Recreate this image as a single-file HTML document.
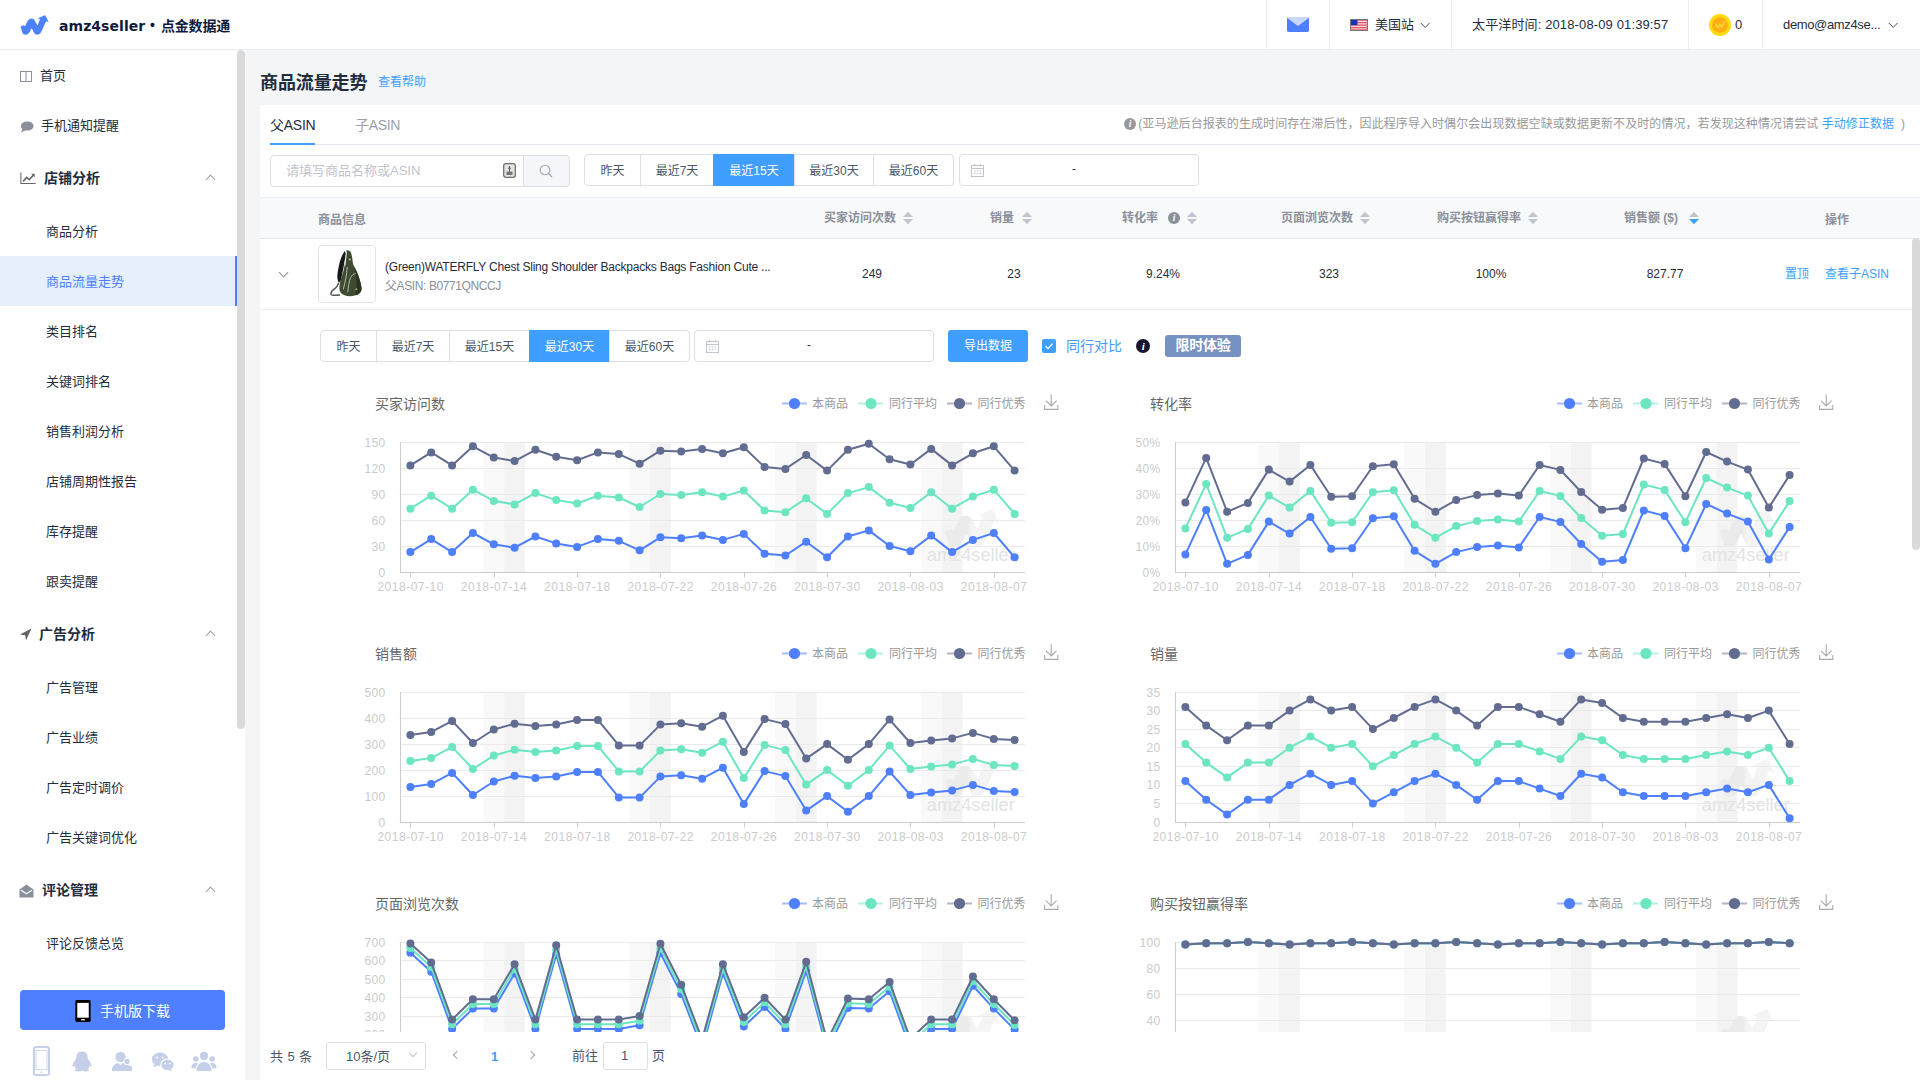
<!DOCTYPE html>
<html lang="zh-CN"><head><meta charset="utf-8"><title>商品流量走势 - amz4seller 点金数据通</title>
<style>
*{box-sizing:border-box;margin:0;padding:0}
html,body{width:1920px;height:1080px;overflow:hidden;background:#f4f5f7}
body{font-family:"Liberation Sans","Noto Sans CJK SC",sans-serif;font-size:12px;color:#1f2d3d;position:relative}
.abs{position:absolute}
a{text-decoration:none;color:#409eff}
.t{position:absolute;white-space:nowrap;line-height:1}
/* header */
#hd{position:absolute;left:0;top:0;width:1920px;height:50px;background:#fff;border-bottom:1px solid #e9ecf2}
.vsep{position:absolute;top:0;width:1px;height:49px;background:#eceef2}
/* sidebar */
#sb{position:absolute;left:0;top:50px;width:245px;height:1030px;background:#fff}
.mi{position:absolute;left:0;width:237px;height:50px;line-height:52px;font-size:13px;color:#1f2d3d;white-space:nowrap}
.mi.sub{padding-left:46px}
.mi.top{font-weight:bold;font-size:14px;line-height:50px}
.mi.act{background:#e6f0fd;color:#4d7fff;border-right:2px solid #4d7fff}
.chev{position:absolute;width:7px;height:7px;border-left:1px solid #9aa3b5;border-top:1px solid #9aa3b5;transform:rotate(45deg)}
/* main */
#card{position:absolute;left:260px;top:105px;width:1660px;height:975px;background:#fff}
.btn{position:absolute;height:32px;line-height:30px;border:1px solid #dcdfe6;background:#fff;color:#48576a;font-size:12px;text-align:center;white-space:nowrap}
.btn.on{background:#409eff;border-color:#409eff;color:#fff}
.inp{position:absolute;height:32px;border:1px solid #dcdfe6;background:#fff;border-radius:4px}
.th{position:absolute;top:198px;height:40px;line-height:40px;font-size:12px;font-weight:bold;color:#8a8f99;white-space:nowrap}
.td{position:absolute;font-size:12px;color:#1f2d3d;white-space:nowrap;line-height:14px}
.sort{position:absolute;width:10px;height:14px}
</style></head>
<body>
<div id="hd">
<svg class="abs" style="left:14px;top:8px" width="42" height="34" viewBox="0 0 42 34">
<path d="M6.7 19.2 Q6.6 18.4 7.6 17.9 L8.6 17.4 Q9.6 17 10.3 17.8 Q10.9 18.5 11.4 17.5 L13.4 13.2 Q14.8 10.6 17.3 10.6 Q19.9 10.6 21 12.8 L22.8 16.4 Q23.4 17.6 23.9 16.4 L26.1 11 L23.6 10.5 L30.6 7.2 Q31.1 7 31.4 7.5 L34.7 14.3 L32.1 13.3 L27.2 23.9 Q25.7 26.8 23.3 26.8 Q21 26.8 20 24.8 L18.1 20.9 Q17.6 19.9 17.1 20.9 L15.7 23.9 Q14.2 26.7 11.7 26.7 Q9.6 26.7 8.6 25.2 Z" fill="#4d82ff"/></svg>
<div class="t" style="left:59px;top:16px;font-family:DejaVu Sans,Liberation Sans,sans-serif;font-size:14px;font-weight:bold;color:#0f1b3d;line-height:20px;letter-spacing:0.05px" id="brand">amz4seller</div>
<div class="t" style="left:150px;top:15px;font-size:14px;font-weight:bold;color:#0f1b3d;line-height:20px">•</div>
<div class="t" style="left:161px;top:16px;font-size:14px;font-weight:bold;color:#0f1b3d;line-height:20px;letter-spacing:-0.2px">点金数据通</div>
<div class="vsep" style="left:1266px"></div>
<div class="vsep" style="left:1329px"></div>
<div class="vsep" style="left:1451px"></div>
<div class="vsep" style="left:1688px"></div>
<div class="vsep" style="left:1762px"></div>
<svg class="abs" style="left:1287px;top:17px" width="22" height="15" viewBox="0 0 22 15"><rect x="0" y="0" width="22" height="15" rx="1.8" fill="#4d7fff"/><path d="M1.2 0 H20.8 Q21.6 0.2 21.8 0.9 L11 8.9 L0.2 0.9 Q0.4 0.2 1.2 0 Z" fill="#c9d6ff"/></svg>
<svg class="abs" style="left:1350px;top:19px" width="18" height="12" viewBox="0 0 18 12">
<rect width="18" height="12" fill="#f7d9db"/>
<g fill="#dc5a66"><rect y="0.5" width="18" height="1.3"/><rect y="3" width="18" height="1.3"/><rect y="5.5" width="18" height="1.3"/><rect y="8" width="18" height="1.3"/><rect y="10.3" width="18" height="1.2"/></g>
<rect x="0.5" y="0.5" width="7" height="5.6" fill="#1535b8"/><rect x="0.5" y="0.5" width="17" height="11" fill="none" stroke="#777" stroke-width="1"/></svg>
<div class="t" style="left:1375px;top:18px;font-size:13px;color:#1f2d3d;line-height:14px">美国站</div>
<svg class="abs" style="left:1419.5px;top:21.6px" width="11" height="7" viewBox="0 0 11 7"><path d="M0.7 0.9 L5.2 5.4 L9.7 0.9" fill="none" stroke="#4a4f5c" stroke-width="1"/></svg>
<div class="t" style="left:1472px;top:18px;font-size:13px;color:#1f2d3d;line-height:14px;letter-spacing:0.13px" id="tm">太平洋时间: 2018-08-09 01:39:57</div>
<svg class="abs" style="left:1708px;top:13px" width="24" height="24" viewBox="0 0 24 24"><circle cx="12" cy="12" r="11" fill="#ffdb0c"/><circle cx="12" cy="12" r="7.8" fill="#ffad12"/><path d="M7 11.8 L8.6 10.6 L10 13 L11.8 9.6 L13.6 12.6 L15.6 8.6 L14.6 8.4 L17.2 7.4 L17.8 10 L16.9 9.5 L14.6 14.6 Q13.7 15.8 12.8 14.6 L11.9 13 L10.9 14.8 Q10 16 9 14.8 Z" fill="#ffd633"/></svg>
<div class="t" style="left:1735px;top:18px;font-size:13px;color:#1f2d3d;line-height:14px">0</div>
<div class="t" style="left:1783px;top:18px;font-size:13px;color:#1f2d3d;line-height:14px;letter-spacing:-0.35px" id="usr">demo@amz4se...</div>
<svg class="abs" style="left:1888.2px;top:21.6px" width="11" height="7" viewBox="0 0 11 7"><path d="M0.7 0.9 L5.2 5.4 L9.7 0.9" fill="none" stroke="#4a4f5c" stroke-width="1"/></svg>
</div>
<div id="sb">
<div class="mi " style="top:0px;padding-left:40px">首页</div>
<svg class="abs" style="left:20px;top:21px" width="12" height="11" viewBox="0 0 12 11"><rect x="0.5" y="0.5" width="11" height="10" fill="none" stroke="#8a8f99" stroke-width="1"/><line x1="6" y1="0.5" x2="6" y2="10.5" stroke="#8a8f99"/></svg>
<div class="mi " style="top:50px;padding-left:41px">手机通知提醒</div>
<svg class="abs" style="left:20px;top:71px" width="14" height="12" viewBox="0 0 14 12"><ellipse cx="7.2" cy="5" rx="6.4" ry="4.6" fill="#8a8f99"/><path d="M2.5 7.5 L1 11.5 L6 9 Z" fill="#8a8f99"/></svg>
<div class="mi top" style="top:103px;padding-left:44px">店铺分析</div>
<svg class="abs" style="left:20px;top:122px" width="16" height="12.5" viewBox="0 0 18 14"><path d="M1 0.5 V13 H17.5" fill="none" stroke="#666" stroke-width="1.2"/><path d="M3.5 10.5 L7.5 6 L10.5 8.5 L15.5 3" fill="none" stroke="#666" stroke-width="1.8"/><path d="M12.5 2 H16.5 V6 Z" fill="#666"/></svg>
<div class="chev" style="left:207px;top:126px"></div>
<div class="mi sub" style="top:156px;">商品分析</div>
<div class="mi sub act" style="top:206px;">商品流量走势</div>
<div class="mi sub" style="top:256px;">类目排名</div>
<div class="mi sub" style="top:306px;">关键词排名</div>
<div class="mi sub" style="top:356px;">销售利润分析</div>
<div class="mi sub" style="top:406px;">店铺周期性报告</div>
<div class="mi sub" style="top:456px;">库存提醒</div>
<div class="mi sub" style="top:506px;">跟卖提醒</div>
<div class="mi top" style="top:559px;padding-left:39px">广告分析</div>
<svg class="abs" style="left:19px;top:578px" width="13" height="13" viewBox="0 0 13 13"><path d="M12.5 0.5 L0.8 6.6 L6.2 7.2 L7 12.5 Z" fill="#666"/></svg>
<div class="chev" style="left:207px;top:582px"></div>
<div class="mi sub" style="top:612px;">广告管理</div>
<div class="mi sub" style="top:662px;">广告业绩</div>
<div class="mi sub" style="top:712px;">广告定时调价</div>
<div class="mi sub" style="top:762px;">广告关键词优化</div>
<div class="mi top" style="top:815px;padding-left:42px">评论管理</div>
<svg class="abs" style="left:19px;top:834px" width="15" height="14" viewBox="0 0 15 14"><path d="M0.5 5.5 L7.5 0.5 L14.5 5.5 V13.5 H0.5 Z" fill="#8a8f99"/><path d="M2 6.2 L7.5 9.8 L13 6.2" fill="none" stroke="#fff" stroke-width="1.2"/></svg>
<div class="chev" style="left:207px;top:838px"></div>
<div class="mi sub" style="top:868px;">评论反馈总览</div>
<div class="abs" style="left:237px;top:0;width:8px;height:679px;background:#dadada;border-radius:4px"></div>
<div class="abs" style="left:0;top:920px;width:237px;height:110px;background:#fff"></div>
<div class="abs" style="left:20px;top:940px;width:205px;height:40px;background:#4d7fff;border-radius:4px"></div>
<svg class="abs" style="left:75px;top:950px" width="16" height="22" viewBox="0 0 16 23"><rect x="0" y="0" width="16" height="23" rx="1.5" fill="#000"/><rect x="2" y="3" width="12" height="15.5" fill="#fff"/><rect x="6" y="20" width="4" height="1.3" fill="#fff"/></svg>
<div class="t" style="left:100px;top:953px;font-size:14px;color:#fff;line-height:16px">手机版下载</div>
<svg class="abs" style="left:33px;top:996px" width="17" height="30" viewBox="0 0 17 30"><rect x="1" y="1" width="15" height="28" rx="2" fill="none" stroke="#c5cfe8" stroke-width="2"/><rect x="3" y="4.5" width="11" height="19" fill="#fff" stroke="#c5cfe8" stroke-width="0.8"/><circle cx="8.5" cy="26.3" r="1" fill="#c5cfe8"/></svg>
<svg class="abs" style="left:71px;top:1001px" width="22" height="21" viewBox="0 0 22 21"><path d="M11 0.5 C6.5 0.5 5 4 5.2 7.5 C3.5 10 1.5 12.5 1.5 15 C1.5 16.5 2.5 16 3.5 14.8 C4 16.5 4.8 17.5 5.5 18 C4 18.5 3.5 19.2 4 19.8 C5 20.8 9 20.6 11 19.5 C13 20.6 17 20.8 18 19.8 C18.5 19.2 18 18.5 16.5 18 C17.2 17.5 18 16.5 18.5 14.8 C19.5 16 20.5 16.5 20.5 15 C20.5 12.5 18.5 10 16.8 7.5 C17 4 15.5 0.5 11 0.5 Z" fill="#c5cfe8"/></svg>
<svg class="abs" style="left:111px;top:1001px" width="22" height="21" viewBox="0 0 22 21"><circle cx="9.5" cy="6" r="5.2" fill="#c5cfe8"/><path d="M0.8 20 C0.8 15 4 12.5 7 12 L9.5 14 L12 12 C15 12.5 19 15 19 20 Z" fill="#c5cfe8"/><circle cx="16" cy="10.5" r="3.2" fill="#c5cfe8" stroke="#fff" stroke-width="1"/><path d="M14 15 C16 13.5 19 14 21 16 L21 20 H14 Z" fill="#c5cfe8"/></svg>
<svg class="abs" style="left:151px;top:1002px" width="24" height="20" viewBox="0 0 24 20"><ellipse cx="9" cy="7.2" rx="8.2" ry="6.8" fill="#c5cfe8"/><path d="M3.5 11.5 L2.5 15.5 L7 13 Z" fill="#c5cfe8"/><ellipse cx="16.5" cy="12.8" rx="6.8" ry="5.8" fill="#c5cfe8" stroke="#fff" stroke-width="1.2"/><path d="M19.5 17 L21.5 19.5 L17 18 Z" fill="#c5cfe8"/><circle cx="6.2" cy="5.5" r="1" fill="#fff"/><circle cx="11.5" cy="5.5" r="1" fill="#fff"/><circle cx="14.3" cy="11.5" r="0.9" fill="#fff"/><circle cx="18.7" cy="11.5" r="0.9" fill="#fff"/></svg>
<svg class="abs" style="left:191px;top:1001px" width="26" height="21" viewBox="0 0 26 21"><circle cx="13" cy="5" r="4.2" fill="#c5cfe8"/><circle cx="4.8" cy="8" r="2.8" fill="#c5cfe8"/><circle cx="21.2" cy="8" r="2.8" fill="#c5cfe8"/><path d="M5.5 20 C5.5 14 9 11 13 11 C17 11 20.5 14 20.5 20 Z" fill="#c5cfe8"/><path d="M0.5 17 C0.5 13.5 2.5 11.8 5 11.8 C6 11.8 6.8 12 7.2 12.4 C5.5 14 4.6 15.5 4.4 17.5 Z" fill="#c5cfe8"/><path d="M25.5 17 C25.5 13.5 23.5 11.8 21 11.8 C20 11.8 19.2 12 18.8 12.4 C20.5 14 21.4 15.5 21.6 17.5 Z" fill="#c5cfe8"/></svg>
</div>
<div class="t" style="left:260px;top:70.5px;font-size:18px;font-weight:bold;color:#1f2d3d;line-height:24px;letter-spacing:-0.1px">商品流量走势</div>
<div class="t" style="left:378px;top:75px;font-size:12px;color:#409eff;line-height:14px">查看帮助</div>
<div id="card"></div>
<div class="t" style="left:270px;top:117px;font-size:14px;color:#1f2d3d;line-height:16px;letter-spacing:-0.25px" id="tab1">父ASIN</div>
<div class="t" style="left:355px;top:117px;font-size:14px;color:#9aa0aa;line-height:16px;letter-spacing:-0.3px">子ASIN</div>
<div class="abs" style="left:270px;top:144px;width:1650px;height:1px;background:#e4e7ed"></div>
<div class="abs" style="left:270px;top:143px;width:45px;height:2px;background:#409eff"></div>
<svg class="abs" style="left:1124px;top:118px" width="12" height="12" viewBox="0 0 14 14"><circle cx="7" cy="7" r="7" fill="#999"/><text x="7.2" y="11" text-anchor="middle" font-family="Liberation Serif,serif" font-style="italic" font-weight="bold" font-size="11" fill="#fff">i</text></svg>
<div class="t" style="right:15px;top:116px;font-size:12px;color:#999;line-height:16px;letter-spacing:0.07px" id="note">(亚马逊后台报表的生成时间存在滞后性，因此程序导入时偶尔会出现数据空缺或数据更新不及时的情况，若发现这种情况请尝试 <a>手动修正数据</a>&nbsp;&nbsp;)</div>
<div class="inp" style="left:270px;top:155px;width:254px;border-radius:4px 0 0 4px"></div>
<div class="t" style="left:286px;top:163px;font-size:13px;color:#c0c4cc;line-height:16px">请填写商品名称或ASIN</div>
<svg class="abs" style="left:503px;top:163px" width="13" height="15" viewBox="0 0 13 15"><rect x="0.7" y="0.7" width="11.6" height="13.6" rx="2" fill="#e4e4e4" stroke="#6e6e6e" stroke-width="1.3"/><rect x="3.4" y="8.6" width="6.2" height="3.4" fill="#777"/><circle cx="6.5" cy="5.2" r="1.2" fill="#666"/><line x1="6.5" y1="3" x2="6.5" y2="9" stroke="#666"/></svg>
<div class="abs" style="left:523px;top:155px;width:47px;height:32px;border:1px solid #dcdfe6;background:#f5f7fa;border-radius:0 4px 4px 0"></div>
<svg class="abs" style="left:539px;top:164px" width="14" height="14" viewBox="0 0 14 14"><circle cx="6" cy="6" r="4.8" fill="none" stroke="#a0a5ae" stroke-width="1.1"/><line x1="9.5" y1="9.5" x2="13" y2="13" stroke="#a0a5ae" stroke-width="1.2"/></svg>
<div class="btn" style="left:584px;top:154px;width:57px;height:32px;line-height:32px;border-radius:4px 0 0 4px;">昨天</div>
<div class="btn" style="left:640px;top:154px;width:74px;height:32px;line-height:32px;">最近7天</div>
<div class="btn on" style="left:713px;top:154px;width:82px;height:32px;line-height:32px;">最近15天</div>
<div class="btn" style="left:794px;top:154px;width:80px;height:32px;line-height:32px;">最近30天</div>
<div class="btn" style="left:873px;top:154px;width:81px;height:32px;line-height:32px;border-radius:0 4px 4px 0;">最近60天</div>
<div class="inp" style="left:959px;top:154px;width:240px"></div>
<svg class="abs" style="left:971px;top:164px" width="13" height="13" viewBox="0 0 13 13"><rect x="0.5" y="1.5" width="12" height="11" fill="none" stroke="#c0c4cc"/><line x1="0.5" y1="4.5" x2="12.5" y2="4.5" stroke="#c0c4cc"/><line x1="3.5" y1="0" x2="3.5" y2="2.5" stroke="#c0c4cc"/><line x1="9.5" y1="0" x2="9.5" y2="2.5" stroke="#c0c4cc"/><g fill="#c0c4cc"><rect x="3" y="6.5" width="1.5" height="1"/><rect x="5.8" y="6.5" width="1.5" height="1"/><rect x="8.6" y="6.5" width="1.5" height="1"/><rect x="3" y="9" width="1.5" height="1"/><rect x="5.8" y="9" width="1.5" height="1"/><rect x="8.6" y="9" width="1.5" height="1"/></g></svg>
<div class="t" style="left:1072px;top:162px;font-size:12px;color:#333;line-height:14px">-</div>
<div class="abs" style="left:260px;top:197px;width:1660px;height:1px;background:#ebeef5"></div>
<div class="abs" style="left:260px;top:198px;width:1660px;height:40px;background:#f8f9fb"></div>
<div class="abs" style="left:260px;top:238px;width:1660px;height:1px;background:#e6e9f0"></div>
<div class="th" style="left:318px;top:200px">商品信息</div>
<div class="th" style="left:824px;top:198px">买家访问次数</div>
<svg class="abs" style="left:903px;top:211px" width="10" height="14" viewBox="0 0 10 14"><path d="M0 6 L5 0.8 L10 6 Z" fill="#c0c4cc"/><path d="M0 8 L5 13.2 L10 8 Z" fill="#c0c4cc"/></svg>
<div class="th" style="left:990px;top:198px">销量</div>
<svg class="abs" style="left:1022px;top:211px" width="10" height="14" viewBox="0 0 10 14"><path d="M0 6 L5 0.8 L10 6 Z" fill="#c0c4cc"/><path d="M0 8 L5 13.2 L10 8 Z" fill="#c0c4cc"/></svg>
<div class="th" style="left:1122px;top:198px">转化率</div>
<div class="th" style="left:1281px;top:198px">页面浏览次数</div>
<svg class="abs" style="left:1360px;top:211px" width="10" height="14" viewBox="0 0 10 14"><path d="M0 6 L5 0.8 L10 6 Z" fill="#c0c4cc"/><path d="M0 8 L5 13.2 L10 8 Z" fill="#c0c4cc"/></svg>
<div class="th" style="left:1437px;top:198px">购买按钮赢得率</div>
<svg class="abs" style="left:1528px;top:211px" width="10" height="14" viewBox="0 0 10 14"><path d="M0 6 L5 0.8 L10 6 Z" fill="#c0c4cc"/><path d="M0 8 L5 13.2 L10 8 Z" fill="#c0c4cc"/></svg>
<div class="th" style="left:1624px;top:198px">销售额 ($)</div>
<svg class="abs" style="left:1689px;top:211px" width="10" height="14" viewBox="0 0 10 14"><path d="M0 6 L5 0.8 L10 6 Z" fill="#c0c4cc"/><path d="M0 8 L5 13.2 L10 8 Z" fill="#409eff"/></svg>
<svg class="abs" style="left:1168px;top:212px" width="12" height="12" viewBox="0 0 14 14"><circle cx="7" cy="7" r="7" fill="#8a8f99"/><text x="7.2" y="11" text-anchor="middle" font-family="Liberation Serif,serif" font-style="italic" font-weight="bold" font-size="11" fill="#fff">i</text></svg>
<svg class="abs" style="left:1187px;top:211px" width="10" height="14" viewBox="0 0 10 14"><path d="M0 6 L5 0.8 L10 6 Z" fill="#c0c4cc"/><path d="M0 8 L5 13.2 L10 8 Z" fill="#c0c4cc"/></svg>
<div class="th" style="left:1825px;top:200px">操作</div>
<div class="abs" style="left:260px;top:309px;width:1652px;height:1px;background:#ebeef5"></div>
<div class="chev" style="left:280px;top:269px;transform:rotate(225deg);border-color:#8a8f99"></div>
<div class="abs" style="left:318px;top:245px;width:58px;height:58px;border:1px solid #e3e3e3;border-radius:4px;background:#fff"></div>
<svg class="abs" style="left:318px;top:245px" width="58" height="58" viewBox="0 0 58 58">
<path d="M26.8 5.9 C24.5 9 22 15 20.9 20.7 C19.8 26 19.2 30 19.4 32.5 C19.6 35 20.2 37 20.9 37.9 L23 35 C24 30 25 25 25.6 21.9 C26.6 16 27.4 11 28 8.8 Z" fill="#17181a"/>
<path d="M28.3 5.3 C30 5.2 31.8 5.8 32.7 7.1 C34 10 34.4 15 35.1 18.9 C36 21.5 37.6 24 38.7 26.6 C40.8 31.5 42.6 37 43.4 42 C43.8 44.5 43.2 46.2 42.2 47.4 C41 49 39.5 49.8 37.5 50.3 C35.5 50.9 33.5 51.2 31.5 51.2 C28.5 51.1 26 50.5 24.4 49.1 C22.6 47.8 21.7 46.3 21.5 44.4 C21.3 42 21.6 39.5 22.1 37.3 C23 33 24.6 29 25.6 25.4 C26.5 21.5 27 18 27.4 14.8 C27.8 11.5 28 8 28.3 5.3 Z" fill="#3f4a32"/>
<path d="M35.1 18.9 C36 21.5 37.6 24 38.7 26.6 C40.8 31.5 42.6 37 43.4 42 C43.8 44.5 43.2 46.2 42.2 47.4 C41 49 39.5 49.8 37.5 50.3 C38.5 44 39 37 38 30 C37.4 26 36.4 22 35.1 18.9 Z" fill="#2a3222"/>
<path d="M28.4 6.5 C28 11 27.6 16 26.8 20.7" fill="none" stroke="#e9ebe3" stroke-width="1.1"/>
<path d="M29.2 21.9 C29 25.5 28.6 29 28 32.5 C27.3 36.5 26.2 40.5 25.3 44.4" fill="none" stroke="#b4b8a6" stroke-width="1"/>
<path d="M37.5 28.4 C35.4 29 33.6 30.5 32.7 32.5 C31 36.5 30.2 42 29.8 47.4" fill="none" stroke="#b4b8a6" stroke-width="1"/>
<path d="M20.6 37.9 C20 39.6 19.4 41 18.5 42 C17 43.6 15 44.8 13.8 46.2 C12.8 47.4 12.6 48.8 13.2 49.7 C14 50.4 15.3 50.4 16.7 50.3 C18.5 50.2 20.5 50.1 22.1 50" fill="none" stroke="#55584f" stroke-width="1.5"/>
<circle cx="31.8" cy="14.5" r="0.9" fill="#c9ccbe"/><path d="M36.5 44.5 l2.2 -1.6 l1 2.4 z" fill="#9ea38f"/></svg>
<div class="td" style="left:385px;top:260px;color:#1f2d3d;letter-spacing:-0.22px" id="ptitle">(Green)WATERFLY Chest Sling Shoulder Backpacks Bags Fashion Cute ...</div>
<div class="td" style="left:385px;top:279px;color:#8a8f99;letter-spacing:-0.4px" id="pasin">父ASIN: B0771QNCCJ</div>
<div class="td" style="left:822px;width:100px;text-align:center;top:267px">249</div>
<div class="td" style="left:964px;width:100px;text-align:center;top:267px">23</div>
<div class="td" style="left:1113px;width:100px;text-align:center;top:267px">9.24%</div>
<div class="td" style="left:1279px;width:100px;text-align:center;top:267px">323</div>
<div class="td" style="left:1441px;width:100px;text-align:center;top:267px">100%</div>
<div class="td" style="left:1615px;width:100px;text-align:center;top:267px">827.77</div>
<div class="td" style="left:1785px;top:267px;color:#409eff">置顶</div>
<div class="td" style="left:1825px;top:267px;color:#409eff" id="viewsub">查看子ASIN</div>
<div class="btn" style="left:320px;top:330px;width:57px;height:32px;line-height:32px;border-radius:4px 0 0 4px;">昨天</div>
<div class="btn" style="left:376px;top:330px;width:74px;height:32px;line-height:32px;">最近7天</div>
<div class="btn" style="left:449px;top:330px;width:81px;height:32px;line-height:32px;">最近15天</div>
<div class="btn on" style="left:529px;top:330px;width:81px;height:32px;line-height:32px;">最近30天</div>
<div class="btn" style="left:609px;top:330px;width:81px;height:32px;line-height:32px;border-radius:0 4px 4px 0;">最近60天</div>
<div class="inp" style="left:694px;top:330px;width:240px"></div>
<svg class="abs" style="left:706px;top:340px" width="13" height="13" viewBox="0 0 13 13"><rect x="0.5" y="1.5" width="12" height="11" fill="none" stroke="#c0c4cc"/><line x1="0.5" y1="4.5" x2="12.5" y2="4.5" stroke="#c0c4cc"/><line x1="3.5" y1="0" x2="3.5" y2="2.5" stroke="#c0c4cc"/><line x1="9.5" y1="0" x2="9.5" y2="2.5" stroke="#c0c4cc"/><g fill="#c0c4cc"><rect x="3" y="6.5" width="1.5" height="1"/><rect x="5.8" y="6.5" width="1.5" height="1"/><rect x="8.6" y="6.5" width="1.5" height="1"/><rect x="3" y="9" width="1.5" height="1"/><rect x="5.8" y="9" width="1.5" height="1"/><rect x="8.6" y="9" width="1.5" height="1"/></g></svg>
<div class="t" style="left:807px;top:338px;font-size:12px;color:#333;line-height:14px">-</div>
<div class="abs" style="left:948px;top:330px;width:80px;height:32px;background:#409eff;border-radius:3px;color:#fff;font-size:12px;line-height:33px;text-align:center">导出数据</div>
<div class="abs" style="left:1042px;top:339px;width:14px;height:14px;background:#409eff;border-radius:2px"></div>
<svg class="abs" style="left:1042px;top:339px" width="14" height="14" viewBox="0 0 14 14"><path d="M3.5 7 L6 9.6 L10.5 4.6" fill="none" stroke="#fff" stroke-width="1.3"/></svg>
<div class="t" style="left:1066px;top:338px;font-size:14px;color:#409eff;line-height:16px">同行对比</div>
<svg class="abs" style="left:1136px;top:339px" width="14" height="14" viewBox="0 0 14 14"><circle cx="7" cy="7" r="7" fill="#15152e"/><text x="7.2" y="11" text-anchor="middle" font-family="Liberation Serif,serif" font-style="italic" font-weight="bold" font-size="11" fill="#fff">i</text></svg>
<div class="abs" style="left:1165px;top:335px;width:76px;height:22px;background:#7692c1;border-radius:3px;color:#fff;font-size:14px;font-weight:bold;line-height:21px;text-align:center;letter-spacing:-0.3px">限时体验</div>
<svg class="abs" style="left:360px;top:385px" width="720" height="250" viewBox="0 0 720 250" font-family="Liberation Sans, Noto Sans CJK SC, sans-serif">
<text x="15" y="24" font-size="14" fill="#666">买家访问数</text>
<line x1="422" y1="18.5" x2="447" y2="18.5" stroke="#4d7fff" stroke-width="2" opacity="0.5"/><circle cx="434.5" cy="18.5" r="5.6" fill="#4d7fff"/><text x="452" y="23" font-size="12" fill="#999">本商品</text>
<line x1="498" y1="18.5" x2="523" y2="18.5" stroke="#6be6c1" stroke-width="2" opacity="0.5"/><circle cx="511" cy="18.5" r="5.6" fill="#6be6c1"/><text x="529" y="23" font-size="12" fill="#999">同行平均</text>
<line x1="587" y1="18.5" x2="612" y2="18.5" stroke="#626c91" stroke-width="2" opacity="0.5"/><circle cx="599.5" cy="18.5" r="5.6" fill="#626c91"/><text x="617.5" y="23" font-size="12" fill="#999">同行优秀</text>
<path d="M691.2 9.3 V21 M685.8 15.6 L691.2 21 L696.6 15.6 M684.6 20 V24.4 H697.8 V20" fill="none" stroke="#aaa" stroke-width="1.1"/>
<rect x="123.33" y="57.5" width="20.83" height="130.0" fill="#f9f9f9"/>
<rect x="144.17" y="57.5" width="20.83" height="130.0" fill="#f3f3f3"/>
<rect x="269.17" y="57.5" width="20.83" height="130.0" fill="#f9f9f9"/>
<rect x="290.00" y="57.5" width="20.83" height="130.0" fill="#f3f3f3"/>
<rect x="415.00" y="57.5" width="20.83" height="130.0" fill="#f9f9f9"/>
<rect x="435.83" y="57.5" width="20.83" height="130.0" fill="#f3f3f3"/>
<rect x="560.83" y="57.5" width="20.83" height="130.0" fill="#f9f9f9"/>
<rect x="581.67" y="57.5" width="20.83" height="130.0" fill="#f3f3f3"/>
<defs><linearGradient id="wm00" x1="0" y1="0" x2="1" y2="0"><stop offset="0.42" stop-color="#ebebeb"/><stop offset="0.5" stop-color="#f4f4f4"/></linearGradient></defs>
<path d="M6.7 19.2 Q6.6 18.4 7.6 17.9 L8.6 17.4 Q9.6 17 10.3 17.8 Q10.9 18.5 11.4 17.5 L13.4 13.2 Q14.8 10.6 17.3 10.6 Q19.9 10.6 21 12.8 L22.8 16.4 Q23.4 17.6 23.9 16.4 L26.1 11 L23.6 10.5 L30.6 7.2 Q31.1 7 31.4 7.5 L34.7 14.3 L32.1 13.3 L27.2 23.9 Q25.7 26.8 23.3 26.8 Q21 26.8 20 24.8 L18.1 20.9 Q17.6 19.9 17.1 20.9 L15.7 23.9 Q14.2 26.7 11.7 26.7 Q9.6 26.7 8.6 25.2 Z" transform="translate(572.2 110.4) scale(1.93)" fill="url(#wm00)"/>
<text x="566.8" y="175.9" font-size="17.5" fill="#e3e3e3" textLength="88" lengthAdjust="spacingAndGlyphs">amz4seller</text>
<text x="25.5" y="191.55" font-size="12" fill="#cbcbcb" text-anchor="end" letter-spacing="0.35">0</text>
<line x1="40.5" y1="161.5" x2="665.0" y2="161.5" stroke="#eaeaea" stroke-width="1"/>
<text x="25.5" y="165.55" font-size="12" fill="#cbcbcb" text-anchor="end" letter-spacing="0.35">30</text>
<line x1="40.5" y1="135.5" x2="665.0" y2="135.5" stroke="#eaeaea" stroke-width="1"/>
<text x="25.5" y="139.55" font-size="12" fill="#cbcbcb" text-anchor="end" letter-spacing="0.35">60</text>
<line x1="40.5" y1="109.5" x2="665.0" y2="109.5" stroke="#eaeaea" stroke-width="1"/>
<text x="25.5" y="113.55" font-size="12" fill="#cbcbcb" text-anchor="end" letter-spacing="0.35">90</text>
<line x1="40.5" y1="83.5" x2="665.0" y2="83.5" stroke="#eaeaea" stroke-width="1"/>
<text x="25.5" y="87.55" font-size="12" fill="#cbcbcb" text-anchor="end" letter-spacing="0.35">120</text>
<line x1="40.5" y1="57.5" x2="665.0" y2="57.5" stroke="#eaeaea" stroke-width="1"/>
<text x="25.5" y="61.55" font-size="12" fill="#cbcbcb" text-anchor="end" letter-spacing="0.35">150</text>
<line x1="40.5" y1="57.0" x2="40.5" y2="188.0" stroke="#ccc" stroke-width="1"/>
<line x1="40.0" y1="187.5" x2="665.0" y2="187.5" stroke="#ccc" stroke-width="1"/>
<line x1="50.5" y1="187.5" x2="50.5" y2="192.5" stroke="#ccc" stroke-width="1"/>
<text x="50.4" y="206.0" font-size="12" fill="#cbcbcb" text-anchor="middle" textLength="66" lengthAdjust="spacing">2018-07-10</text>
<line x1="134.5" y1="187.5" x2="134.5" y2="192.5" stroke="#ccc" stroke-width="1"/>
<text x="133.8" y="206.0" font-size="12" fill="#cbcbcb" text-anchor="middle" textLength="66" lengthAdjust="spacing">2018-07-14</text>
<line x1="217.5" y1="187.5" x2="217.5" y2="192.5" stroke="#ccc" stroke-width="1"/>
<text x="217.1" y="206.0" font-size="12" fill="#cbcbcb" text-anchor="middle" textLength="66" lengthAdjust="spacing">2018-07-18</text>
<line x1="300.5" y1="187.5" x2="300.5" y2="192.5" stroke="#ccc" stroke-width="1"/>
<text x="300.4" y="206.0" font-size="12" fill="#cbcbcb" text-anchor="middle" textLength="66" lengthAdjust="spacing">2018-07-22</text>
<line x1="384.5" y1="187.5" x2="384.5" y2="192.5" stroke="#ccc" stroke-width="1"/>
<text x="383.8" y="206.0" font-size="12" fill="#cbcbcb" text-anchor="middle" textLength="66" lengthAdjust="spacing">2018-07-26</text>
<line x1="467.5" y1="187.5" x2="467.5" y2="192.5" stroke="#ccc" stroke-width="1"/>
<text x="467.1" y="206.0" font-size="12" fill="#cbcbcb" text-anchor="middle" textLength="66" lengthAdjust="spacing">2018-07-30</text>
<line x1="550.5" y1="187.5" x2="550.5" y2="192.5" stroke="#ccc" stroke-width="1"/>
<text x="550.4" y="206.0" font-size="12" fill="#cbcbcb" text-anchor="middle" textLength="66" lengthAdjust="spacing">2018-08-03</text>
<line x1="634.5" y1="187.5" x2="634.5" y2="192.5" stroke="#ccc" stroke-width="1"/>
<text x="633.8" y="206.0" font-size="12" fill="#cbcbcb" text-anchor="middle" textLength="66" lengthAdjust="spacing">2018-08-07</text>
<polyline fill="none" stroke="#4d7fff" stroke-width="2" stroke-linejoin="round" points="50.4,167.1 71.2,154.1 92.1,167.1 112.9,148.0 133.8,159.3 154.6,162.7 175.4,151.5 196.2,158.4 217.1,161.9 237.9,154.1 258.8,155.8 279.6,165.3 300.4,152.3 321.2,153.2 342.1,150.6 362.9,154.9 383.8,148.9 404.6,168.8 425.4,170.5 446.2,156.7 467.1,172.3 487.9,151.5 508.8,145.4 529.6,161.0 550.4,166.2 571.2,150.6 592.1,167.1 612.9,154.9 633.8,148.0 654.6,172.3"/><circle cx="50.4" cy="167.1" r="4" fill="#4d7fff"/><circle cx="71.2" cy="154.1" r="4" fill="#4d7fff"/><circle cx="92.1" cy="167.1" r="4" fill="#4d7fff"/><circle cx="112.9" cy="148.0" r="4" fill="#4d7fff"/><circle cx="133.8" cy="159.3" r="4" fill="#4d7fff"/><circle cx="154.6" cy="162.7" r="4" fill="#4d7fff"/><circle cx="175.4" cy="151.5" r="4" fill="#4d7fff"/><circle cx="196.2" cy="158.4" r="4" fill="#4d7fff"/><circle cx="217.1" cy="161.9" r="4" fill="#4d7fff"/><circle cx="237.9" cy="154.1" r="4" fill="#4d7fff"/><circle cx="258.8" cy="155.8" r="4" fill="#4d7fff"/><circle cx="279.6" cy="165.3" r="4" fill="#4d7fff"/><circle cx="300.4" cy="152.3" r="4" fill="#4d7fff"/><circle cx="321.2" cy="153.2" r="4" fill="#4d7fff"/><circle cx="342.1" cy="150.6" r="4" fill="#4d7fff"/><circle cx="362.9" cy="154.9" r="4" fill="#4d7fff"/><circle cx="383.8" cy="148.9" r="4" fill="#4d7fff"/><circle cx="404.6" cy="168.8" r="4" fill="#4d7fff"/><circle cx="425.4" cy="170.5" r="4" fill="#4d7fff"/><circle cx="446.2" cy="156.7" r="4" fill="#4d7fff"/><circle cx="467.1" cy="172.3" r="4" fill="#4d7fff"/><circle cx="487.9" cy="151.5" r="4" fill="#4d7fff"/><circle cx="508.8" cy="145.4" r="4" fill="#4d7fff"/><circle cx="529.6" cy="161.0" r="4" fill="#4d7fff"/><circle cx="550.4" cy="166.2" r="4" fill="#4d7fff"/><circle cx="571.2" cy="150.6" r="4" fill="#4d7fff"/><circle cx="592.1" cy="167.1" r="4" fill="#4d7fff"/><circle cx="612.9" cy="154.9" r="4" fill="#4d7fff"/><circle cx="633.8" cy="148.0" r="4" fill="#4d7fff"/><circle cx="654.6" cy="172.3" r="4" fill="#4d7fff"/>
<polyline fill="none" stroke="#6be6c1" stroke-width="2" stroke-linejoin="round" points="50.4,123.7 71.2,110.7 92.1,123.7 112.9,104.7 133.8,115.9 154.6,119.4 175.4,108.1 196.2,115.1 217.1,118.5 237.9,110.7 258.8,112.5 279.6,122.0 300.4,109.0 321.2,109.9 342.1,107.3 362.9,111.6 383.8,105.5 404.6,125.5 425.4,127.2 446.2,113.3 467.1,128.9 487.9,108.1 508.8,102.1 529.6,117.7 550.4,122.9 571.2,107.3 592.1,123.7 612.9,111.6 633.8,104.7 654.6,128.9"/><circle cx="50.4" cy="123.7" r="4" fill="#6be6c1"/><circle cx="71.2" cy="110.7" r="4" fill="#6be6c1"/><circle cx="92.1" cy="123.7" r="4" fill="#6be6c1"/><circle cx="112.9" cy="104.7" r="4" fill="#6be6c1"/><circle cx="133.8" cy="115.9" r="4" fill="#6be6c1"/><circle cx="154.6" cy="119.4" r="4" fill="#6be6c1"/><circle cx="175.4" cy="108.1" r="4" fill="#6be6c1"/><circle cx="196.2" cy="115.1" r="4" fill="#6be6c1"/><circle cx="217.1" cy="118.5" r="4" fill="#6be6c1"/><circle cx="237.9" cy="110.7" r="4" fill="#6be6c1"/><circle cx="258.8" cy="112.5" r="4" fill="#6be6c1"/><circle cx="279.6" cy="122.0" r="4" fill="#6be6c1"/><circle cx="300.4" cy="109.0" r="4" fill="#6be6c1"/><circle cx="321.2" cy="109.9" r="4" fill="#6be6c1"/><circle cx="342.1" cy="107.3" r="4" fill="#6be6c1"/><circle cx="362.9" cy="111.6" r="4" fill="#6be6c1"/><circle cx="383.8" cy="105.5" r="4" fill="#6be6c1"/><circle cx="404.6" cy="125.5" r="4" fill="#6be6c1"/><circle cx="425.4" cy="127.2" r="4" fill="#6be6c1"/><circle cx="446.2" cy="113.3" r="4" fill="#6be6c1"/><circle cx="467.1" cy="128.9" r="4" fill="#6be6c1"/><circle cx="487.9" cy="108.1" r="4" fill="#6be6c1"/><circle cx="508.8" cy="102.1" r="4" fill="#6be6c1"/><circle cx="529.6" cy="117.7" r="4" fill="#6be6c1"/><circle cx="550.4" cy="122.9" r="4" fill="#6be6c1"/><circle cx="571.2" cy="107.3" r="4" fill="#6be6c1"/><circle cx="592.1" cy="123.7" r="4" fill="#6be6c1"/><circle cx="612.9" cy="111.6" r="4" fill="#6be6c1"/><circle cx="633.8" cy="104.7" r="4" fill="#6be6c1"/><circle cx="654.6" cy="128.9" r="4" fill="#6be6c1"/>
<polyline fill="none" stroke="#626c91" stroke-width="2" stroke-linejoin="round" points="50.4,80.4 71.2,67.4 92.1,80.4 112.9,61.3 133.8,72.6 154.6,76.1 175.4,64.8 196.2,71.7 217.1,75.2 237.9,67.4 258.8,69.1 279.6,78.7 300.4,65.7 321.2,66.5 342.1,63.9 362.9,68.3 383.8,62.2 404.6,82.1 425.4,83.9 446.2,70.0 467.1,85.6 487.9,64.8 508.8,58.7 529.6,74.3 550.4,79.5 571.2,63.9 592.1,80.4 612.9,68.3 633.8,61.3 654.6,85.6"/><circle cx="50.4" cy="80.4" r="4" fill="#626c91"/><circle cx="71.2" cy="67.4" r="4" fill="#626c91"/><circle cx="92.1" cy="80.4" r="4" fill="#626c91"/><circle cx="112.9" cy="61.3" r="4" fill="#626c91"/><circle cx="133.8" cy="72.6" r="4" fill="#626c91"/><circle cx="154.6" cy="76.1" r="4" fill="#626c91"/><circle cx="175.4" cy="64.8" r="4" fill="#626c91"/><circle cx="196.2" cy="71.7" r="4" fill="#626c91"/><circle cx="217.1" cy="75.2" r="4" fill="#626c91"/><circle cx="237.9" cy="67.4" r="4" fill="#626c91"/><circle cx="258.8" cy="69.1" r="4" fill="#626c91"/><circle cx="279.6" cy="78.7" r="4" fill="#626c91"/><circle cx="300.4" cy="65.7" r="4" fill="#626c91"/><circle cx="321.2" cy="66.5" r="4" fill="#626c91"/><circle cx="342.1" cy="63.9" r="4" fill="#626c91"/><circle cx="362.9" cy="68.3" r="4" fill="#626c91"/><circle cx="383.8" cy="62.2" r="4" fill="#626c91"/><circle cx="404.6" cy="82.1" r="4" fill="#626c91"/><circle cx="425.4" cy="83.9" r="4" fill="#626c91"/><circle cx="446.2" cy="70.0" r="4" fill="#626c91"/><circle cx="467.1" cy="85.6" r="4" fill="#626c91"/><circle cx="487.9" cy="64.8" r="4" fill="#626c91"/><circle cx="508.8" cy="58.7" r="4" fill="#626c91"/><circle cx="529.6" cy="74.3" r="4" fill="#626c91"/><circle cx="550.4" cy="79.5" r="4" fill="#626c91"/><circle cx="571.2" cy="63.9" r="4" fill="#626c91"/><circle cx="592.1" cy="80.4" r="4" fill="#626c91"/><circle cx="612.9" cy="68.3" r="4" fill="#626c91"/><circle cx="633.8" cy="61.3" r="4" fill="#626c91"/><circle cx="654.6" cy="85.6" r="4" fill="#626c91"/>
</svg>
<svg class="abs" style="left:1135px;top:385px" width="720" height="250" viewBox="0 0 720 250" font-family="Liberation Sans, Noto Sans CJK SC, sans-serif">
<text x="15" y="24" font-size="14" fill="#666">转化率</text>
<line x1="422" y1="18.5" x2="447" y2="18.5" stroke="#4d7fff" stroke-width="2" opacity="0.5"/><circle cx="434.5" cy="18.5" r="5.6" fill="#4d7fff"/><text x="452" y="23" font-size="12" fill="#999">本商品</text>
<line x1="498" y1="18.5" x2="523" y2="18.5" stroke="#6be6c1" stroke-width="2" opacity="0.5"/><circle cx="511" cy="18.5" r="5.6" fill="#6be6c1"/><text x="529" y="23" font-size="12" fill="#999">同行平均</text>
<line x1="587" y1="18.5" x2="612" y2="18.5" stroke="#626c91" stroke-width="2" opacity="0.5"/><circle cx="599.5" cy="18.5" r="5.6" fill="#626c91"/><text x="617.5" y="23" font-size="12" fill="#999">同行优秀</text>
<path d="M691.2 9.3 V21 M685.8 15.6 L691.2 21 L696.6 15.6 M684.6 20 V24.4 H697.8 V20" fill="none" stroke="#aaa" stroke-width="1.1"/>
<rect x="123.33" y="57.5" width="20.83" height="130.0" fill="#f9f9f9"/>
<rect x="144.17" y="57.5" width="20.83" height="130.0" fill="#f3f3f3"/>
<rect x="269.17" y="57.5" width="20.83" height="130.0" fill="#f9f9f9"/>
<rect x="290.00" y="57.5" width="20.83" height="130.0" fill="#f3f3f3"/>
<rect x="415.00" y="57.5" width="20.83" height="130.0" fill="#f9f9f9"/>
<rect x="435.83" y="57.5" width="20.83" height="130.0" fill="#f3f3f3"/>
<rect x="560.83" y="57.5" width="20.83" height="130.0" fill="#f9f9f9"/>
<rect x="581.67" y="57.5" width="20.83" height="130.0" fill="#f3f3f3"/>
<defs><linearGradient id="wm10" x1="0" y1="0" x2="1" y2="0"><stop offset="0.42" stop-color="#ebebeb"/><stop offset="0.5" stop-color="#f4f4f4"/></linearGradient></defs>
<path d="M6.7 19.2 Q6.6 18.4 7.6 17.9 L8.6 17.4 Q9.6 17 10.3 17.8 Q10.9 18.5 11.4 17.5 L13.4 13.2 Q14.8 10.6 17.3 10.6 Q19.9 10.6 21 12.8 L22.8 16.4 Q23.4 17.6 23.9 16.4 L26.1 11 L23.6 10.5 L30.6 7.2 Q31.1 7 31.4 7.5 L34.7 14.3 L32.1 13.3 L27.2 23.9 Q25.7 26.8 23.3 26.8 Q21 26.8 20 24.8 L18.1 20.9 Q17.6 19.9 17.1 20.9 L15.7 23.9 Q14.2 26.7 11.7 26.7 Q9.6 26.7 8.6 25.2 Z" transform="translate(572.2 110.4) scale(1.93)" fill="url(#wm10)"/>
<text x="566.8" y="175.9" font-size="17.5" fill="#e3e3e3" textLength="88" lengthAdjust="spacingAndGlyphs">amz4seller</text>
<text x="25.5" y="191.55" font-size="12" fill="#cbcbcb" text-anchor="end" letter-spacing="0.35">0%</text>
<line x1="40.5" y1="161.5" x2="665.0" y2="161.5" stroke="#eaeaea" stroke-width="1"/>
<text x="25.5" y="165.55" font-size="12" fill="#cbcbcb" text-anchor="end" letter-spacing="0.35">10%</text>
<line x1="40.5" y1="135.5" x2="665.0" y2="135.5" stroke="#eaeaea" stroke-width="1"/>
<text x="25.5" y="139.55" font-size="12" fill="#cbcbcb" text-anchor="end" letter-spacing="0.35">20%</text>
<line x1="40.5" y1="109.5" x2="665.0" y2="109.5" stroke="#eaeaea" stroke-width="1"/>
<text x="25.5" y="113.55" font-size="12" fill="#cbcbcb" text-anchor="end" letter-spacing="0.35">30%</text>
<line x1="40.5" y1="83.5" x2="665.0" y2="83.5" stroke="#eaeaea" stroke-width="1"/>
<text x="25.5" y="87.55" font-size="12" fill="#cbcbcb" text-anchor="end" letter-spacing="0.35">40%</text>
<line x1="40.5" y1="57.5" x2="665.0" y2="57.5" stroke="#eaeaea" stroke-width="1"/>
<text x="25.5" y="61.55" font-size="12" fill="#cbcbcb" text-anchor="end" letter-spacing="0.35">50%</text>
<line x1="40.5" y1="57.0" x2="40.5" y2="188.0" stroke="#ccc" stroke-width="1"/>
<line x1="40.0" y1="187.5" x2="665.0" y2="187.5" stroke="#ccc" stroke-width="1"/>
<line x1="50.5" y1="187.5" x2="50.5" y2="192.5" stroke="#ccc" stroke-width="1"/>
<text x="50.4" y="206.0" font-size="12" fill="#cbcbcb" text-anchor="middle" textLength="66" lengthAdjust="spacing">2018-07-10</text>
<line x1="134.5" y1="187.5" x2="134.5" y2="192.5" stroke="#ccc" stroke-width="1"/>
<text x="133.8" y="206.0" font-size="12" fill="#cbcbcb" text-anchor="middle" textLength="66" lengthAdjust="spacing">2018-07-14</text>
<line x1="217.5" y1="187.5" x2="217.5" y2="192.5" stroke="#ccc" stroke-width="1"/>
<text x="217.1" y="206.0" font-size="12" fill="#cbcbcb" text-anchor="middle" textLength="66" lengthAdjust="spacing">2018-07-18</text>
<line x1="300.5" y1="187.5" x2="300.5" y2="192.5" stroke="#ccc" stroke-width="1"/>
<text x="300.4" y="206.0" font-size="12" fill="#cbcbcb" text-anchor="middle" textLength="66" lengthAdjust="spacing">2018-07-22</text>
<line x1="384.5" y1="187.5" x2="384.5" y2="192.5" stroke="#ccc" stroke-width="1"/>
<text x="383.8" y="206.0" font-size="12" fill="#cbcbcb" text-anchor="middle" textLength="66" lengthAdjust="spacing">2018-07-26</text>
<line x1="467.5" y1="187.5" x2="467.5" y2="192.5" stroke="#ccc" stroke-width="1"/>
<text x="467.1" y="206.0" font-size="12" fill="#cbcbcb" text-anchor="middle" textLength="66" lengthAdjust="spacing">2018-07-30</text>
<line x1="550.5" y1="187.5" x2="550.5" y2="192.5" stroke="#ccc" stroke-width="1"/>
<text x="550.4" y="206.0" font-size="12" fill="#cbcbcb" text-anchor="middle" textLength="66" lengthAdjust="spacing">2018-08-03</text>
<line x1="634.5" y1="187.5" x2="634.5" y2="192.5" stroke="#ccc" stroke-width="1"/>
<text x="633.8" y="206.0" font-size="12" fill="#cbcbcb" text-anchor="middle" textLength="66" lengthAdjust="spacing">2018-08-07</text>
<polyline fill="none" stroke="#4d7fff" stroke-width="2" stroke-linejoin="round" points="50.4,169.4 71.2,124.9 92.1,178.8 112.9,169.9 133.8,136.6 154.6,148.6 175.4,132.0 196.2,163.7 217.1,163.2 237.9,133.3 258.8,131.2 279.6,165.8 300.4,178.8 321.2,167.1 342.1,162.1 362.9,160.6 383.8,162.6 404.6,132.0 425.4,136.9 446.2,159.0 467.1,176.7 487.9,175.1 508.8,125.5 529.6,130.9 550.4,163.2 571.2,119.0 592.1,128.6 612.9,136.6 633.8,174.6 654.6,142.1"/><circle cx="50.4" cy="169.4" r="4" fill="#4d7fff"/><circle cx="71.2" cy="124.9" r="4" fill="#4d7fff"/><circle cx="92.1" cy="178.8" r="4" fill="#4d7fff"/><circle cx="112.9" cy="169.9" r="4" fill="#4d7fff"/><circle cx="133.8" cy="136.6" r="4" fill="#4d7fff"/><circle cx="154.6" cy="148.6" r="4" fill="#4d7fff"/><circle cx="175.4" cy="132.0" r="4" fill="#4d7fff"/><circle cx="196.2" cy="163.7" r="4" fill="#4d7fff"/><circle cx="217.1" cy="163.2" r="4" fill="#4d7fff"/><circle cx="237.9" cy="133.3" r="4" fill="#4d7fff"/><circle cx="258.8" cy="131.2" r="4" fill="#4d7fff"/><circle cx="279.6" cy="165.8" r="4" fill="#4d7fff"/><circle cx="300.4" cy="178.8" r="4" fill="#4d7fff"/><circle cx="321.2" cy="167.1" r="4" fill="#4d7fff"/><circle cx="342.1" cy="162.1" r="4" fill="#4d7fff"/><circle cx="362.9" cy="160.6" r="4" fill="#4d7fff"/><circle cx="383.8" cy="162.6" r="4" fill="#4d7fff"/><circle cx="404.6" cy="132.0" r="4" fill="#4d7fff"/><circle cx="425.4" cy="136.9" r="4" fill="#4d7fff"/><circle cx="446.2" cy="159.0" r="4" fill="#4d7fff"/><circle cx="467.1" cy="176.7" r="4" fill="#4d7fff"/><circle cx="487.9" cy="175.1" r="4" fill="#4d7fff"/><circle cx="508.8" cy="125.5" r="4" fill="#4d7fff"/><circle cx="529.6" cy="130.9" r="4" fill="#4d7fff"/><circle cx="550.4" cy="163.2" r="4" fill="#4d7fff"/><circle cx="571.2" cy="119.0" r="4" fill="#4d7fff"/><circle cx="592.1" cy="128.6" r="4" fill="#4d7fff"/><circle cx="612.9" cy="136.6" r="4" fill="#4d7fff"/><circle cx="633.8" cy="174.6" r="4" fill="#4d7fff"/><circle cx="654.6" cy="142.1" r="4" fill="#4d7fff"/>
<polyline fill="none" stroke="#6be6c1" stroke-width="2" stroke-linejoin="round" points="50.4,143.4 71.2,98.9 92.1,152.8 112.9,143.9 133.8,110.6 154.6,122.6 175.4,106.0 196.2,137.7 217.1,137.2 237.9,107.3 258.8,105.2 279.6,139.8 300.4,152.8 321.2,141.1 342.1,136.1 362.9,134.6 383.8,136.6 404.6,106.0 425.4,110.9 446.2,133.0 467.1,150.7 487.9,149.1 508.8,99.5 529.6,104.9 550.4,137.2 571.2,93.0 592.1,102.6 612.9,110.6 633.8,148.6 654.6,116.1"/><circle cx="50.4" cy="143.4" r="4" fill="#6be6c1"/><circle cx="71.2" cy="98.9" r="4" fill="#6be6c1"/><circle cx="92.1" cy="152.8" r="4" fill="#6be6c1"/><circle cx="112.9" cy="143.9" r="4" fill="#6be6c1"/><circle cx="133.8" cy="110.6" r="4" fill="#6be6c1"/><circle cx="154.6" cy="122.6" r="4" fill="#6be6c1"/><circle cx="175.4" cy="106.0" r="4" fill="#6be6c1"/><circle cx="196.2" cy="137.7" r="4" fill="#6be6c1"/><circle cx="217.1" cy="137.2" r="4" fill="#6be6c1"/><circle cx="237.9" cy="107.3" r="4" fill="#6be6c1"/><circle cx="258.8" cy="105.2" r="4" fill="#6be6c1"/><circle cx="279.6" cy="139.8" r="4" fill="#6be6c1"/><circle cx="300.4" cy="152.8" r="4" fill="#6be6c1"/><circle cx="321.2" cy="141.1" r="4" fill="#6be6c1"/><circle cx="342.1" cy="136.1" r="4" fill="#6be6c1"/><circle cx="362.9" cy="134.6" r="4" fill="#6be6c1"/><circle cx="383.8" cy="136.6" r="4" fill="#6be6c1"/><circle cx="404.6" cy="106.0" r="4" fill="#6be6c1"/><circle cx="425.4" cy="110.9" r="4" fill="#6be6c1"/><circle cx="446.2" cy="133.0" r="4" fill="#6be6c1"/><circle cx="467.1" cy="150.7" r="4" fill="#6be6c1"/><circle cx="487.9" cy="149.1" r="4" fill="#6be6c1"/><circle cx="508.8" cy="99.5" r="4" fill="#6be6c1"/><circle cx="529.6" cy="104.9" r="4" fill="#6be6c1"/><circle cx="550.4" cy="137.2" r="4" fill="#6be6c1"/><circle cx="571.2" cy="93.0" r="4" fill="#6be6c1"/><circle cx="592.1" cy="102.6" r="4" fill="#6be6c1"/><circle cx="612.9" cy="110.6" r="4" fill="#6be6c1"/><circle cx="633.8" cy="148.6" r="4" fill="#6be6c1"/><circle cx="654.6" cy="116.1" r="4" fill="#6be6c1"/>
<polyline fill="none" stroke="#626c91" stroke-width="2" stroke-linejoin="round" points="50.4,117.4 71.2,72.9 92.1,126.8 112.9,117.9 133.8,84.6 154.6,96.6 175.4,80.0 196.2,111.7 217.1,111.2 237.9,81.3 258.8,79.2 279.6,113.8 300.4,126.8 321.2,115.1 342.1,110.1 362.9,108.6 383.8,110.6 404.6,80.0 425.4,84.9 446.2,107.0 467.1,124.7 487.9,123.1 508.8,73.5 529.6,78.9 550.4,111.2 571.2,67.0 592.1,76.6 612.9,84.6 633.8,122.6 654.6,90.1"/><circle cx="50.4" cy="117.4" r="4" fill="#626c91"/><circle cx="71.2" cy="72.9" r="4" fill="#626c91"/><circle cx="92.1" cy="126.8" r="4" fill="#626c91"/><circle cx="112.9" cy="117.9" r="4" fill="#626c91"/><circle cx="133.8" cy="84.6" r="4" fill="#626c91"/><circle cx="154.6" cy="96.6" r="4" fill="#626c91"/><circle cx="175.4" cy="80.0" r="4" fill="#626c91"/><circle cx="196.2" cy="111.7" r="4" fill="#626c91"/><circle cx="217.1" cy="111.2" r="4" fill="#626c91"/><circle cx="237.9" cy="81.3" r="4" fill="#626c91"/><circle cx="258.8" cy="79.2" r="4" fill="#626c91"/><circle cx="279.6" cy="113.8" r="4" fill="#626c91"/><circle cx="300.4" cy="126.8" r="4" fill="#626c91"/><circle cx="321.2" cy="115.1" r="4" fill="#626c91"/><circle cx="342.1" cy="110.1" r="4" fill="#626c91"/><circle cx="362.9" cy="108.6" r="4" fill="#626c91"/><circle cx="383.8" cy="110.6" r="4" fill="#626c91"/><circle cx="404.6" cy="80.0" r="4" fill="#626c91"/><circle cx="425.4" cy="84.9" r="4" fill="#626c91"/><circle cx="446.2" cy="107.0" r="4" fill="#626c91"/><circle cx="467.1" cy="124.7" r="4" fill="#626c91"/><circle cx="487.9" cy="123.1" r="4" fill="#626c91"/><circle cx="508.8" cy="73.5" r="4" fill="#626c91"/><circle cx="529.6" cy="78.9" r="4" fill="#626c91"/><circle cx="550.4" cy="111.2" r="4" fill="#626c91"/><circle cx="571.2" cy="67.0" r="4" fill="#626c91"/><circle cx="592.1" cy="76.6" r="4" fill="#626c91"/><circle cx="612.9" cy="84.6" r="4" fill="#626c91"/><circle cx="633.8" cy="122.6" r="4" fill="#626c91"/><circle cx="654.6" cy="90.1" r="4" fill="#626c91"/>
</svg>
<svg class="abs" style="left:360px;top:635px" width="720" height="250" viewBox="0 0 720 250" font-family="Liberation Sans, Noto Sans CJK SC, sans-serif">
<text x="15" y="24" font-size="14" fill="#666">销售额</text>
<line x1="422" y1="18.5" x2="447" y2="18.5" stroke="#4d7fff" stroke-width="2" opacity="0.5"/><circle cx="434.5" cy="18.5" r="5.6" fill="#4d7fff"/><text x="452" y="23" font-size="12" fill="#999">本商品</text>
<line x1="498" y1="18.5" x2="523" y2="18.5" stroke="#6be6c1" stroke-width="2" opacity="0.5"/><circle cx="511" cy="18.5" r="5.6" fill="#6be6c1"/><text x="529" y="23" font-size="12" fill="#999">同行平均</text>
<line x1="587" y1="18.5" x2="612" y2="18.5" stroke="#626c91" stroke-width="2" opacity="0.5"/><circle cx="599.5" cy="18.5" r="5.6" fill="#626c91"/><text x="617.5" y="23" font-size="12" fill="#999">同行优秀</text>
<path d="M691.2 9.3 V21 M685.8 15.6 L691.2 21 L696.6 15.6 M684.6 20 V24.4 H697.8 V20" fill="none" stroke="#aaa" stroke-width="1.1"/>
<rect x="123.33" y="57.5" width="20.83" height="130.0" fill="#f9f9f9"/>
<rect x="144.17" y="57.5" width="20.83" height="130.0" fill="#f3f3f3"/>
<rect x="269.17" y="57.5" width="20.83" height="130.0" fill="#f9f9f9"/>
<rect x="290.00" y="57.5" width="20.83" height="130.0" fill="#f3f3f3"/>
<rect x="415.00" y="57.5" width="20.83" height="130.0" fill="#f9f9f9"/>
<rect x="435.83" y="57.5" width="20.83" height="130.0" fill="#f3f3f3"/>
<rect x="560.83" y="57.5" width="20.83" height="130.0" fill="#f9f9f9"/>
<rect x="581.67" y="57.5" width="20.83" height="130.0" fill="#f3f3f3"/>
<defs><linearGradient id="wm01" x1="0" y1="0" x2="1" y2="0"><stop offset="0.42" stop-color="#ebebeb"/><stop offset="0.5" stop-color="#f4f4f4"/></linearGradient></defs>
<path d="M6.7 19.2 Q6.6 18.4 7.6 17.9 L8.6 17.4 Q9.6 17 10.3 17.8 Q10.9 18.5 11.4 17.5 L13.4 13.2 Q14.8 10.6 17.3 10.6 Q19.9 10.6 21 12.8 L22.8 16.4 Q23.4 17.6 23.9 16.4 L26.1 11 L23.6 10.5 L30.6 7.2 Q31.1 7 31.4 7.5 L34.7 14.3 L32.1 13.3 L27.2 23.9 Q25.7 26.8 23.3 26.8 Q21 26.8 20 24.8 L18.1 20.9 Q17.6 19.9 17.1 20.9 L15.7 23.9 Q14.2 26.7 11.7 26.7 Q9.6 26.7 8.6 25.2 Z" transform="translate(572.2 110.4) scale(1.93)" fill="url(#wm01)"/>
<text x="566.8" y="175.9" font-size="17.5" fill="#e3e3e3" textLength="88" lengthAdjust="spacingAndGlyphs">amz4seller</text>
<text x="25.5" y="191.55" font-size="12" fill="#cbcbcb" text-anchor="end" letter-spacing="0.35">0</text>
<line x1="40.5" y1="161.5" x2="665.0" y2="161.5" stroke="#eaeaea" stroke-width="1"/>
<text x="25.5" y="165.55" font-size="12" fill="#cbcbcb" text-anchor="end" letter-spacing="0.35">100</text>
<line x1="40.5" y1="135.5" x2="665.0" y2="135.5" stroke="#eaeaea" stroke-width="1"/>
<text x="25.5" y="139.55" font-size="12" fill="#cbcbcb" text-anchor="end" letter-spacing="0.35">200</text>
<line x1="40.5" y1="109.5" x2="665.0" y2="109.5" stroke="#eaeaea" stroke-width="1"/>
<text x="25.5" y="113.55" font-size="12" fill="#cbcbcb" text-anchor="end" letter-spacing="0.35">300</text>
<line x1="40.5" y1="83.5" x2="665.0" y2="83.5" stroke="#eaeaea" stroke-width="1"/>
<text x="25.5" y="87.55" font-size="12" fill="#cbcbcb" text-anchor="end" letter-spacing="0.35">400</text>
<line x1="40.5" y1="57.5" x2="665.0" y2="57.5" stroke="#eaeaea" stroke-width="1"/>
<text x="25.5" y="61.55" font-size="12" fill="#cbcbcb" text-anchor="end" letter-spacing="0.35">500</text>
<line x1="40.5" y1="57.0" x2="40.5" y2="188.0" stroke="#ccc" stroke-width="1"/>
<line x1="40.0" y1="187.5" x2="665.0" y2="187.5" stroke="#ccc" stroke-width="1"/>
<line x1="50.5" y1="187.5" x2="50.5" y2="192.5" stroke="#ccc" stroke-width="1"/>
<text x="50.4" y="206.0" font-size="12" fill="#cbcbcb" text-anchor="middle" textLength="66" lengthAdjust="spacing">2018-07-10</text>
<line x1="134.5" y1="187.5" x2="134.5" y2="192.5" stroke="#ccc" stroke-width="1"/>
<text x="133.8" y="206.0" font-size="12" fill="#cbcbcb" text-anchor="middle" textLength="66" lengthAdjust="spacing">2018-07-14</text>
<line x1="217.5" y1="187.5" x2="217.5" y2="192.5" stroke="#ccc" stroke-width="1"/>
<text x="217.1" y="206.0" font-size="12" fill="#cbcbcb" text-anchor="middle" textLength="66" lengthAdjust="spacing">2018-07-18</text>
<line x1="300.5" y1="187.5" x2="300.5" y2="192.5" stroke="#ccc" stroke-width="1"/>
<text x="300.4" y="206.0" font-size="12" fill="#cbcbcb" text-anchor="middle" textLength="66" lengthAdjust="spacing">2018-07-22</text>
<line x1="384.5" y1="187.5" x2="384.5" y2="192.5" stroke="#ccc" stroke-width="1"/>
<text x="383.8" y="206.0" font-size="12" fill="#cbcbcb" text-anchor="middle" textLength="66" lengthAdjust="spacing">2018-07-26</text>
<line x1="467.5" y1="187.5" x2="467.5" y2="192.5" stroke="#ccc" stroke-width="1"/>
<text x="467.1" y="206.0" font-size="12" fill="#cbcbcb" text-anchor="middle" textLength="66" lengthAdjust="spacing">2018-07-30</text>
<line x1="550.5" y1="187.5" x2="550.5" y2="192.5" stroke="#ccc" stroke-width="1"/>
<text x="550.4" y="206.0" font-size="12" fill="#cbcbcb" text-anchor="middle" textLength="66" lengthAdjust="spacing">2018-08-03</text>
<line x1="634.5" y1="187.5" x2="634.5" y2="192.5" stroke="#ccc" stroke-width="1"/>
<text x="633.8" y="206.0" font-size="12" fill="#cbcbcb" text-anchor="middle" textLength="66" lengthAdjust="spacing">2018-08-07</text>
<polyline fill="none" stroke="#4d7fff" stroke-width="2" stroke-linejoin="round" points="50.4,152.0 71.2,149.1 92.1,137.9 112.9,160.0 133.8,146.5 154.6,140.8 175.4,143.1 196.2,141.6 217.1,136.9 237.9,136.9 258.8,162.4 279.6,162.6 300.4,141.6 321.2,140.3 342.1,143.7 362.9,132.7 383.8,169.1 404.6,136.1 425.4,141.1 446.2,175.6 467.1,161.1 487.9,176.7 508.8,161.1 529.6,136.6 550.4,160.0 571.2,157.4 592.1,155.4 612.9,149.9 633.8,155.9 654.6,156.9"/><circle cx="50.4" cy="152.0" r="4" fill="#4d7fff"/><circle cx="71.2" cy="149.1" r="4" fill="#4d7fff"/><circle cx="92.1" cy="137.9" r="4" fill="#4d7fff"/><circle cx="112.9" cy="160.0" r="4" fill="#4d7fff"/><circle cx="133.8" cy="146.5" r="4" fill="#4d7fff"/><circle cx="154.6" cy="140.8" r="4" fill="#4d7fff"/><circle cx="175.4" cy="143.1" r="4" fill="#4d7fff"/><circle cx="196.2" cy="141.6" r="4" fill="#4d7fff"/><circle cx="217.1" cy="136.9" r="4" fill="#4d7fff"/><circle cx="237.9" cy="136.9" r="4" fill="#4d7fff"/><circle cx="258.8" cy="162.4" r="4" fill="#4d7fff"/><circle cx="279.6" cy="162.6" r="4" fill="#4d7fff"/><circle cx="300.4" cy="141.6" r="4" fill="#4d7fff"/><circle cx="321.2" cy="140.3" r="4" fill="#4d7fff"/><circle cx="342.1" cy="143.7" r="4" fill="#4d7fff"/><circle cx="362.9" cy="132.7" r="4" fill="#4d7fff"/><circle cx="383.8" cy="169.1" r="4" fill="#4d7fff"/><circle cx="404.6" cy="136.1" r="4" fill="#4d7fff"/><circle cx="425.4" cy="141.1" r="4" fill="#4d7fff"/><circle cx="446.2" cy="175.6" r="4" fill="#4d7fff"/><circle cx="467.1" cy="161.1" r="4" fill="#4d7fff"/><circle cx="487.9" cy="176.7" r="4" fill="#4d7fff"/><circle cx="508.8" cy="161.1" r="4" fill="#4d7fff"/><circle cx="529.6" cy="136.6" r="4" fill="#4d7fff"/><circle cx="550.4" cy="160.0" r="4" fill="#4d7fff"/><circle cx="571.2" cy="157.4" r="4" fill="#4d7fff"/><circle cx="592.1" cy="155.4" r="4" fill="#4d7fff"/><circle cx="612.9" cy="149.9" r="4" fill="#4d7fff"/><circle cx="633.8" cy="155.9" r="4" fill="#4d7fff"/><circle cx="654.6" cy="156.9" r="4" fill="#4d7fff"/>
<polyline fill="none" stroke="#6be6c1" stroke-width="2" stroke-linejoin="round" points="50.4,126.0 71.2,123.1 92.1,111.9 112.9,134.0 133.8,120.5 154.6,114.8 175.4,117.1 196.2,115.6 217.1,110.9 237.9,110.9 258.8,136.4 279.6,136.6 300.4,115.6 321.2,114.3 342.1,117.7 362.9,106.7 383.8,143.1 404.6,110.1 425.4,115.1 446.2,149.6 467.1,135.1 487.9,150.7 508.8,135.1 529.6,110.6 550.4,134.0 571.2,131.4 592.1,129.4 612.9,123.9 633.8,129.9 654.6,130.9"/><circle cx="50.4" cy="126.0" r="4" fill="#6be6c1"/><circle cx="71.2" cy="123.1" r="4" fill="#6be6c1"/><circle cx="92.1" cy="111.9" r="4" fill="#6be6c1"/><circle cx="112.9" cy="134.0" r="4" fill="#6be6c1"/><circle cx="133.8" cy="120.5" r="4" fill="#6be6c1"/><circle cx="154.6" cy="114.8" r="4" fill="#6be6c1"/><circle cx="175.4" cy="117.1" r="4" fill="#6be6c1"/><circle cx="196.2" cy="115.6" r="4" fill="#6be6c1"/><circle cx="217.1" cy="110.9" r="4" fill="#6be6c1"/><circle cx="237.9" cy="110.9" r="4" fill="#6be6c1"/><circle cx="258.8" cy="136.4" r="4" fill="#6be6c1"/><circle cx="279.6" cy="136.6" r="4" fill="#6be6c1"/><circle cx="300.4" cy="115.6" r="4" fill="#6be6c1"/><circle cx="321.2" cy="114.3" r="4" fill="#6be6c1"/><circle cx="342.1" cy="117.7" r="4" fill="#6be6c1"/><circle cx="362.9" cy="106.7" r="4" fill="#6be6c1"/><circle cx="383.8" cy="143.1" r="4" fill="#6be6c1"/><circle cx="404.6" cy="110.1" r="4" fill="#6be6c1"/><circle cx="425.4" cy="115.1" r="4" fill="#6be6c1"/><circle cx="446.2" cy="149.6" r="4" fill="#6be6c1"/><circle cx="467.1" cy="135.1" r="4" fill="#6be6c1"/><circle cx="487.9" cy="150.7" r="4" fill="#6be6c1"/><circle cx="508.8" cy="135.1" r="4" fill="#6be6c1"/><circle cx="529.6" cy="110.6" r="4" fill="#6be6c1"/><circle cx="550.4" cy="134.0" r="4" fill="#6be6c1"/><circle cx="571.2" cy="131.4" r="4" fill="#6be6c1"/><circle cx="592.1" cy="129.4" r="4" fill="#6be6c1"/><circle cx="612.9" cy="123.9" r="4" fill="#6be6c1"/><circle cx="633.8" cy="129.9" r="4" fill="#6be6c1"/><circle cx="654.6" cy="130.9" r="4" fill="#6be6c1"/>
<polyline fill="none" stroke="#626c91" stroke-width="2" stroke-linejoin="round" points="50.4,100.0 71.2,97.1 92.1,85.9 112.9,108.0 133.8,94.5 154.6,88.8 175.4,91.1 196.2,89.6 217.1,84.9 237.9,84.9 258.8,110.4 279.6,110.6 300.4,89.6 321.2,88.3 342.1,91.7 362.9,80.7 383.8,117.1 404.6,84.1 425.4,89.1 446.2,123.6 467.1,109.1 487.9,124.7 508.8,109.1 529.6,84.6 550.4,108.0 571.2,105.4 592.1,103.4 612.9,97.9 633.8,103.9 654.6,104.9"/><circle cx="50.4" cy="100.0" r="4" fill="#626c91"/><circle cx="71.2" cy="97.1" r="4" fill="#626c91"/><circle cx="92.1" cy="85.9" r="4" fill="#626c91"/><circle cx="112.9" cy="108.0" r="4" fill="#626c91"/><circle cx="133.8" cy="94.5" r="4" fill="#626c91"/><circle cx="154.6" cy="88.8" r="4" fill="#626c91"/><circle cx="175.4" cy="91.1" r="4" fill="#626c91"/><circle cx="196.2" cy="89.6" r="4" fill="#626c91"/><circle cx="217.1" cy="84.9" r="4" fill="#626c91"/><circle cx="237.9" cy="84.9" r="4" fill="#626c91"/><circle cx="258.8" cy="110.4" r="4" fill="#626c91"/><circle cx="279.6" cy="110.6" r="4" fill="#626c91"/><circle cx="300.4" cy="89.6" r="4" fill="#626c91"/><circle cx="321.2" cy="88.3" r="4" fill="#626c91"/><circle cx="342.1" cy="91.7" r="4" fill="#626c91"/><circle cx="362.9" cy="80.7" r="4" fill="#626c91"/><circle cx="383.8" cy="117.1" r="4" fill="#626c91"/><circle cx="404.6" cy="84.1" r="4" fill="#626c91"/><circle cx="425.4" cy="89.1" r="4" fill="#626c91"/><circle cx="446.2" cy="123.6" r="4" fill="#626c91"/><circle cx="467.1" cy="109.1" r="4" fill="#626c91"/><circle cx="487.9" cy="124.7" r="4" fill="#626c91"/><circle cx="508.8" cy="109.1" r="4" fill="#626c91"/><circle cx="529.6" cy="84.6" r="4" fill="#626c91"/><circle cx="550.4" cy="108.0" r="4" fill="#626c91"/><circle cx="571.2" cy="105.4" r="4" fill="#626c91"/><circle cx="592.1" cy="103.4" r="4" fill="#626c91"/><circle cx="612.9" cy="97.9" r="4" fill="#626c91"/><circle cx="633.8" cy="103.9" r="4" fill="#626c91"/><circle cx="654.6" cy="104.9" r="4" fill="#626c91"/>
</svg>
<svg class="abs" style="left:1135px;top:635px" width="720" height="250" viewBox="0 0 720 250" font-family="Liberation Sans, Noto Sans CJK SC, sans-serif">
<text x="15" y="24" font-size="14" fill="#666">销量</text>
<line x1="422" y1="18.5" x2="447" y2="18.5" stroke="#4d7fff" stroke-width="2" opacity="0.5"/><circle cx="434.5" cy="18.5" r="5.6" fill="#4d7fff"/><text x="452" y="23" font-size="12" fill="#999">本商品</text>
<line x1="498" y1="18.5" x2="523" y2="18.5" stroke="#6be6c1" stroke-width="2" opacity="0.5"/><circle cx="511" cy="18.5" r="5.6" fill="#6be6c1"/><text x="529" y="23" font-size="12" fill="#999">同行平均</text>
<line x1="587" y1="18.5" x2="612" y2="18.5" stroke="#626c91" stroke-width="2" opacity="0.5"/><circle cx="599.5" cy="18.5" r="5.6" fill="#626c91"/><text x="617.5" y="23" font-size="12" fill="#999">同行优秀</text>
<path d="M691.2 9.3 V21 M685.8 15.6 L691.2 21 L696.6 15.6 M684.6 20 V24.4 H697.8 V20" fill="none" stroke="#aaa" stroke-width="1.1"/>
<rect x="123.33" y="57.5" width="20.83" height="130.0" fill="#f9f9f9"/>
<rect x="144.17" y="57.5" width="20.83" height="130.0" fill="#f3f3f3"/>
<rect x="269.17" y="57.5" width="20.83" height="130.0" fill="#f9f9f9"/>
<rect x="290.00" y="57.5" width="20.83" height="130.0" fill="#f3f3f3"/>
<rect x="415.00" y="57.5" width="20.83" height="130.0" fill="#f9f9f9"/>
<rect x="435.83" y="57.5" width="20.83" height="130.0" fill="#f3f3f3"/>
<rect x="560.83" y="57.5" width="20.83" height="130.0" fill="#f9f9f9"/>
<rect x="581.67" y="57.5" width="20.83" height="130.0" fill="#f3f3f3"/>
<defs><linearGradient id="wm11" x1="0" y1="0" x2="1" y2="0"><stop offset="0.42" stop-color="#ebebeb"/><stop offset="0.5" stop-color="#f4f4f4"/></linearGradient></defs>
<path d="M6.7 19.2 Q6.6 18.4 7.6 17.9 L8.6 17.4 Q9.6 17 10.3 17.8 Q10.9 18.5 11.4 17.5 L13.4 13.2 Q14.8 10.6 17.3 10.6 Q19.9 10.6 21 12.8 L22.8 16.4 Q23.4 17.6 23.9 16.4 L26.1 11 L23.6 10.5 L30.6 7.2 Q31.1 7 31.4 7.5 L34.7 14.3 L32.1 13.3 L27.2 23.9 Q25.7 26.8 23.3 26.8 Q21 26.8 20 24.8 L18.1 20.9 Q17.6 19.9 17.1 20.9 L15.7 23.9 Q14.2 26.7 11.7 26.7 Q9.6 26.7 8.6 25.2 Z" transform="translate(572.2 110.4) scale(1.93)" fill="url(#wm11)"/>
<text x="566.8" y="175.9" font-size="17.5" fill="#e3e3e3" textLength="88" lengthAdjust="spacingAndGlyphs">amz4seller</text>
<text x="25.5" y="191.55" font-size="12" fill="#cbcbcb" text-anchor="end" letter-spacing="0.35">0</text>
<line x1="40.5" y1="168.5" x2="665.0" y2="168.5" stroke="#eaeaea" stroke-width="1"/>
<text x="25.5" y="172.98" font-size="12" fill="#cbcbcb" text-anchor="end" letter-spacing="0.35">5</text>
<line x1="40.5" y1="150.5" x2="665.0" y2="150.5" stroke="#eaeaea" stroke-width="1"/>
<text x="25.5" y="154.41" font-size="12" fill="#cbcbcb" text-anchor="end" letter-spacing="0.35">10</text>
<line x1="40.5" y1="131.5" x2="665.0" y2="131.5" stroke="#eaeaea" stroke-width="1"/>
<text x="25.5" y="135.84" font-size="12" fill="#cbcbcb" text-anchor="end" letter-spacing="0.35">15</text>
<line x1="40.5" y1="112.5" x2="665.0" y2="112.5" stroke="#eaeaea" stroke-width="1"/>
<text x="25.5" y="117.26" font-size="12" fill="#cbcbcb" text-anchor="end" letter-spacing="0.35">20</text>
<line x1="40.5" y1="94.5" x2="665.0" y2="94.5" stroke="#eaeaea" stroke-width="1"/>
<text x="25.5" y="98.69" font-size="12" fill="#cbcbcb" text-anchor="end" letter-spacing="0.35">25</text>
<line x1="40.5" y1="75.5" x2="665.0" y2="75.5" stroke="#eaeaea" stroke-width="1"/>
<text x="25.5" y="80.12" font-size="12" fill="#cbcbcb" text-anchor="end" letter-spacing="0.35">30</text>
<line x1="40.5" y1="57.5" x2="665.0" y2="57.5" stroke="#eaeaea" stroke-width="1"/>
<text x="25.5" y="61.55" font-size="12" fill="#cbcbcb" text-anchor="end" letter-spacing="0.35">35</text>
<line x1="40.5" y1="57.0" x2="40.5" y2="188.0" stroke="#ccc" stroke-width="1"/>
<line x1="40.0" y1="187.5" x2="665.0" y2="187.5" stroke="#ccc" stroke-width="1"/>
<line x1="50.5" y1="187.5" x2="50.5" y2="192.5" stroke="#ccc" stroke-width="1"/>
<text x="50.4" y="206.0" font-size="12" fill="#cbcbcb" text-anchor="middle" textLength="66" lengthAdjust="spacing">2018-07-10</text>
<line x1="134.5" y1="187.5" x2="134.5" y2="192.5" stroke="#ccc" stroke-width="1"/>
<text x="133.8" y="206.0" font-size="12" fill="#cbcbcb" text-anchor="middle" textLength="66" lengthAdjust="spacing">2018-07-14</text>
<line x1="217.5" y1="187.5" x2="217.5" y2="192.5" stroke="#ccc" stroke-width="1"/>
<text x="217.1" y="206.0" font-size="12" fill="#cbcbcb" text-anchor="middle" textLength="66" lengthAdjust="spacing">2018-07-18</text>
<line x1="300.5" y1="187.5" x2="300.5" y2="192.5" stroke="#ccc" stroke-width="1"/>
<text x="300.4" y="206.0" font-size="12" fill="#cbcbcb" text-anchor="middle" textLength="66" lengthAdjust="spacing">2018-07-22</text>
<line x1="384.5" y1="187.5" x2="384.5" y2="192.5" stroke="#ccc" stroke-width="1"/>
<text x="383.8" y="206.0" font-size="12" fill="#cbcbcb" text-anchor="middle" textLength="66" lengthAdjust="spacing">2018-07-26</text>
<line x1="467.5" y1="187.5" x2="467.5" y2="192.5" stroke="#ccc" stroke-width="1"/>
<text x="467.1" y="206.0" font-size="12" fill="#cbcbcb" text-anchor="middle" textLength="66" lengthAdjust="spacing">2018-07-30</text>
<line x1="550.5" y1="187.5" x2="550.5" y2="192.5" stroke="#ccc" stroke-width="1"/>
<text x="550.4" y="206.0" font-size="12" fill="#cbcbcb" text-anchor="middle" textLength="66" lengthAdjust="spacing">2018-08-03</text>
<line x1="634.5" y1="187.5" x2="634.5" y2="192.5" stroke="#ccc" stroke-width="1"/>
<text x="633.8" y="206.0" font-size="12" fill="#cbcbcb" text-anchor="middle" textLength="66" lengthAdjust="spacing">2018-08-07</text>
<polyline fill="none" stroke="#4d7fff" stroke-width="2" stroke-linejoin="round" points="50.4,146.1 71.2,164.7 92.1,179.6 112.9,164.7 133.8,164.7 154.6,149.9 175.4,138.7 196.2,149.9 217.1,146.1 237.9,168.4 258.8,157.3 279.6,146.1 300.4,138.7 321.2,149.9 342.1,164.7 362.9,146.1 383.8,146.1 404.6,153.6 425.4,161.0 446.2,138.7 467.1,142.4 487.9,157.3 508.8,161.0 529.6,161.0 550.4,161.0 571.2,157.3 592.1,153.6 612.9,157.3 633.8,149.9 654.6,183.3"/><circle cx="50.4" cy="146.1" r="4" fill="#4d7fff"/><circle cx="71.2" cy="164.7" r="4" fill="#4d7fff"/><circle cx="92.1" cy="179.6" r="4" fill="#4d7fff"/><circle cx="112.9" cy="164.7" r="4" fill="#4d7fff"/><circle cx="133.8" cy="164.7" r="4" fill="#4d7fff"/><circle cx="154.6" cy="149.9" r="4" fill="#4d7fff"/><circle cx="175.4" cy="138.7" r="4" fill="#4d7fff"/><circle cx="196.2" cy="149.9" r="4" fill="#4d7fff"/><circle cx="217.1" cy="146.1" r="4" fill="#4d7fff"/><circle cx="237.9" cy="168.4" r="4" fill="#4d7fff"/><circle cx="258.8" cy="157.3" r="4" fill="#4d7fff"/><circle cx="279.6" cy="146.1" r="4" fill="#4d7fff"/><circle cx="300.4" cy="138.7" r="4" fill="#4d7fff"/><circle cx="321.2" cy="149.9" r="4" fill="#4d7fff"/><circle cx="342.1" cy="164.7" r="4" fill="#4d7fff"/><circle cx="362.9" cy="146.1" r="4" fill="#4d7fff"/><circle cx="383.8" cy="146.1" r="4" fill="#4d7fff"/><circle cx="404.6" cy="153.6" r="4" fill="#4d7fff"/><circle cx="425.4" cy="161.0" r="4" fill="#4d7fff"/><circle cx="446.2" cy="138.7" r="4" fill="#4d7fff"/><circle cx="467.1" cy="142.4" r="4" fill="#4d7fff"/><circle cx="487.9" cy="157.3" r="4" fill="#4d7fff"/><circle cx="508.8" cy="161.0" r="4" fill="#4d7fff"/><circle cx="529.6" cy="161.0" r="4" fill="#4d7fff"/><circle cx="550.4" cy="161.0" r="4" fill="#4d7fff"/><circle cx="571.2" cy="157.3" r="4" fill="#4d7fff"/><circle cx="592.1" cy="153.6" r="4" fill="#4d7fff"/><circle cx="612.9" cy="157.3" r="4" fill="#4d7fff"/><circle cx="633.8" cy="149.9" r="4" fill="#4d7fff"/><circle cx="654.6" cy="183.3" r="4" fill="#4d7fff"/>
<polyline fill="none" stroke="#6be6c1" stroke-width="2" stroke-linejoin="round" points="50.4,109.0 71.2,127.6 92.1,142.4 112.9,127.6 133.8,127.6 154.6,112.7 175.4,101.6 196.2,112.7 217.1,109.0 237.9,131.3 258.8,120.1 279.6,109.0 300.4,101.6 321.2,112.7 342.1,127.6 362.9,109.0 383.8,109.0 404.6,116.4 425.4,123.9 446.2,101.6 467.1,105.3 487.9,120.1 508.8,123.9 529.6,123.9 550.4,123.9 571.2,120.1 592.1,116.4 612.9,120.1 633.8,112.7 654.6,146.1"/><circle cx="50.4" cy="109.0" r="4" fill="#6be6c1"/><circle cx="71.2" cy="127.6" r="4" fill="#6be6c1"/><circle cx="92.1" cy="142.4" r="4" fill="#6be6c1"/><circle cx="112.9" cy="127.6" r="4" fill="#6be6c1"/><circle cx="133.8" cy="127.6" r="4" fill="#6be6c1"/><circle cx="154.6" cy="112.7" r="4" fill="#6be6c1"/><circle cx="175.4" cy="101.6" r="4" fill="#6be6c1"/><circle cx="196.2" cy="112.7" r="4" fill="#6be6c1"/><circle cx="217.1" cy="109.0" r="4" fill="#6be6c1"/><circle cx="237.9" cy="131.3" r="4" fill="#6be6c1"/><circle cx="258.8" cy="120.1" r="4" fill="#6be6c1"/><circle cx="279.6" cy="109.0" r="4" fill="#6be6c1"/><circle cx="300.4" cy="101.6" r="4" fill="#6be6c1"/><circle cx="321.2" cy="112.7" r="4" fill="#6be6c1"/><circle cx="342.1" cy="127.6" r="4" fill="#6be6c1"/><circle cx="362.9" cy="109.0" r="4" fill="#6be6c1"/><circle cx="383.8" cy="109.0" r="4" fill="#6be6c1"/><circle cx="404.6" cy="116.4" r="4" fill="#6be6c1"/><circle cx="425.4" cy="123.9" r="4" fill="#6be6c1"/><circle cx="446.2" cy="101.6" r="4" fill="#6be6c1"/><circle cx="467.1" cy="105.3" r="4" fill="#6be6c1"/><circle cx="487.9" cy="120.1" r="4" fill="#6be6c1"/><circle cx="508.8" cy="123.9" r="4" fill="#6be6c1"/><circle cx="529.6" cy="123.9" r="4" fill="#6be6c1"/><circle cx="550.4" cy="123.9" r="4" fill="#6be6c1"/><circle cx="571.2" cy="120.1" r="4" fill="#6be6c1"/><circle cx="592.1" cy="116.4" r="4" fill="#6be6c1"/><circle cx="612.9" cy="120.1" r="4" fill="#6be6c1"/><circle cx="633.8" cy="112.7" r="4" fill="#6be6c1"/><circle cx="654.6" cy="146.1" r="4" fill="#6be6c1"/>
<polyline fill="none" stroke="#626c91" stroke-width="2" stroke-linejoin="round" points="50.4,71.9 71.2,90.4 92.1,105.3 112.9,90.4 133.8,90.4 154.6,75.6 175.4,64.4 196.2,75.6 217.1,71.9 237.9,94.1 258.8,83.0 279.6,71.9 300.4,64.4 321.2,75.6 342.1,90.4 362.9,71.9 383.8,71.9 404.6,79.3 425.4,86.7 446.2,64.4 467.1,68.1 487.9,83.0 508.8,86.7 529.6,86.7 550.4,86.7 571.2,83.0 592.1,79.3 612.9,83.0 633.8,75.6 654.6,109.0"/><circle cx="50.4" cy="71.9" r="4" fill="#626c91"/><circle cx="71.2" cy="90.4" r="4" fill="#626c91"/><circle cx="92.1" cy="105.3" r="4" fill="#626c91"/><circle cx="112.9" cy="90.4" r="4" fill="#626c91"/><circle cx="133.8" cy="90.4" r="4" fill="#626c91"/><circle cx="154.6" cy="75.6" r="4" fill="#626c91"/><circle cx="175.4" cy="64.4" r="4" fill="#626c91"/><circle cx="196.2" cy="75.6" r="4" fill="#626c91"/><circle cx="217.1" cy="71.9" r="4" fill="#626c91"/><circle cx="237.9" cy="94.1" r="4" fill="#626c91"/><circle cx="258.8" cy="83.0" r="4" fill="#626c91"/><circle cx="279.6" cy="71.9" r="4" fill="#626c91"/><circle cx="300.4" cy="64.4" r="4" fill="#626c91"/><circle cx="321.2" cy="75.6" r="4" fill="#626c91"/><circle cx="342.1" cy="90.4" r="4" fill="#626c91"/><circle cx="362.9" cy="71.9" r="4" fill="#626c91"/><circle cx="383.8" cy="71.9" r="4" fill="#626c91"/><circle cx="404.6" cy="79.3" r="4" fill="#626c91"/><circle cx="425.4" cy="86.7" r="4" fill="#626c91"/><circle cx="446.2" cy="64.4" r="4" fill="#626c91"/><circle cx="467.1" cy="68.1" r="4" fill="#626c91"/><circle cx="487.9" cy="83.0" r="4" fill="#626c91"/><circle cx="508.8" cy="86.7" r="4" fill="#626c91"/><circle cx="529.6" cy="86.7" r="4" fill="#626c91"/><circle cx="550.4" cy="86.7" r="4" fill="#626c91"/><circle cx="571.2" cy="83.0" r="4" fill="#626c91"/><circle cx="592.1" cy="79.3" r="4" fill="#626c91"/><circle cx="612.9" cy="83.0" r="4" fill="#626c91"/><circle cx="633.8" cy="75.6" r="4" fill="#626c91"/><circle cx="654.6" cy="109.0" r="4" fill="#626c91"/>
</svg>
<svg class="abs" style="left:360px;top:885px" width="720" height="250" viewBox="0 0 720 250" font-family="Liberation Sans, Noto Sans CJK SC, sans-serif">
<text x="15" y="24" font-size="14" fill="#666">页面浏览次数</text>
<line x1="422" y1="18.5" x2="447" y2="18.5" stroke="#4d7fff" stroke-width="2" opacity="0.5"/><circle cx="434.5" cy="18.5" r="5.6" fill="#4d7fff"/><text x="452" y="23" font-size="12" fill="#999">本商品</text>
<line x1="498" y1="18.5" x2="523" y2="18.5" stroke="#6be6c1" stroke-width="2" opacity="0.5"/><circle cx="511" cy="18.5" r="5.6" fill="#6be6c1"/><text x="529" y="23" font-size="12" fill="#999">同行平均</text>
<line x1="587" y1="18.5" x2="612" y2="18.5" stroke="#626c91" stroke-width="2" opacity="0.5"/><circle cx="599.5" cy="18.5" r="5.6" fill="#626c91"/><text x="617.5" y="23" font-size="12" fill="#999">同行优秀</text>
<path d="M691.2 9.3 V21 M685.8 15.6 L691.2 21 L696.6 15.6 M684.6 20 V24.4 H697.8 V20" fill="none" stroke="#aaa" stroke-width="1.1"/>
<rect x="123.33" y="57.5" width="20.83" height="130.0" fill="#f9f9f9"/>
<rect x="144.17" y="57.5" width="20.83" height="130.0" fill="#f3f3f3"/>
<rect x="269.17" y="57.5" width="20.83" height="130.0" fill="#f9f9f9"/>
<rect x="290.00" y="57.5" width="20.83" height="130.0" fill="#f3f3f3"/>
<rect x="415.00" y="57.5" width="20.83" height="130.0" fill="#f9f9f9"/>
<rect x="435.83" y="57.5" width="20.83" height="130.0" fill="#f3f3f3"/>
<rect x="560.83" y="57.5" width="20.83" height="130.0" fill="#f9f9f9"/>
<rect x="581.67" y="57.5" width="20.83" height="130.0" fill="#f3f3f3"/>
<defs><linearGradient id="wm02" x1="0" y1="0" x2="1" y2="0"><stop offset="0.42" stop-color="#ebebeb"/><stop offset="0.5" stop-color="#f4f4f4"/></linearGradient></defs>
<path d="M6.7 19.2 Q6.6 18.4 7.6 17.9 L8.6 17.4 Q9.6 17 10.3 17.8 Q10.9 18.5 11.4 17.5 L13.4 13.2 Q14.8 10.6 17.3 10.6 Q19.9 10.6 21 12.8 L22.8 16.4 Q23.4 17.6 23.9 16.4 L26.1 11 L23.6 10.5 L30.6 7.2 Q31.1 7 31.4 7.5 L34.7 14.3 L32.1 13.3 L27.2 23.9 Q25.7 26.8 23.3 26.8 Q21 26.8 20 24.8 L18.1 20.9 Q17.6 19.9 17.1 20.9 L15.7 23.9 Q14.2 26.7 11.7 26.7 Q9.6 26.7 8.6 25.2 Z" transform="translate(572.2 110.4) scale(1.93)" fill="url(#wm02)"/>
<text x="566.8" y="175.9" font-size="17.5" fill="#e3e3e3" textLength="88" lengthAdjust="spacingAndGlyphs">amz4seller</text>
<text x="25.5" y="191.55" font-size="12" fill="#cbcbcb" text-anchor="end" letter-spacing="0.35">0</text>
<line x1="40.5" y1="168.5" x2="665.0" y2="168.5" stroke="#eaeaea" stroke-width="1"/>
<text x="25.5" y="172.98" font-size="12" fill="#cbcbcb" text-anchor="end" letter-spacing="0.35">100</text>
<line x1="40.5" y1="150.5" x2="665.0" y2="150.5" stroke="#eaeaea" stroke-width="1"/>
<text x="25.5" y="154.41" font-size="12" fill="#cbcbcb" text-anchor="end" letter-spacing="0.35">200</text>
<line x1="40.5" y1="131.5" x2="665.0" y2="131.5" stroke="#eaeaea" stroke-width="1"/>
<text x="25.5" y="135.84" font-size="12" fill="#cbcbcb" text-anchor="end" letter-spacing="0.35">300</text>
<line x1="40.5" y1="112.5" x2="665.0" y2="112.5" stroke="#eaeaea" stroke-width="1"/>
<text x="25.5" y="117.26" font-size="12" fill="#cbcbcb" text-anchor="end" letter-spacing="0.35">400</text>
<line x1="40.5" y1="94.5" x2="665.0" y2="94.5" stroke="#eaeaea" stroke-width="1"/>
<text x="25.5" y="98.69" font-size="12" fill="#cbcbcb" text-anchor="end" letter-spacing="0.35">500</text>
<line x1="40.5" y1="75.5" x2="665.0" y2="75.5" stroke="#eaeaea" stroke-width="1"/>
<text x="25.5" y="80.12" font-size="12" fill="#cbcbcb" text-anchor="end" letter-spacing="0.35">600</text>
<line x1="40.5" y1="57.5" x2="665.0" y2="57.5" stroke="#eaeaea" stroke-width="1"/>
<text x="25.5" y="61.55" font-size="12" fill="#cbcbcb" text-anchor="end" letter-spacing="0.35">700</text>
<line x1="40.5" y1="57.0" x2="40.5" y2="188.0" stroke="#ccc" stroke-width="1"/>
<line x1="40.0" y1="187.5" x2="665.0" y2="187.5" stroke="#ccc" stroke-width="1"/>
<line x1="50.5" y1="187.5" x2="50.5" y2="192.5" stroke="#ccc" stroke-width="1"/>
<text x="50.4" y="206.0" font-size="12" fill="#cbcbcb" text-anchor="middle" textLength="66" lengthAdjust="spacing">2018-07-10</text>
<line x1="134.5" y1="187.5" x2="134.5" y2="192.5" stroke="#ccc" stroke-width="1"/>
<text x="133.8" y="206.0" font-size="12" fill="#cbcbcb" text-anchor="middle" textLength="66" lengthAdjust="spacing">2018-07-14</text>
<line x1="217.5" y1="187.5" x2="217.5" y2="192.5" stroke="#ccc" stroke-width="1"/>
<text x="217.1" y="206.0" font-size="12" fill="#cbcbcb" text-anchor="middle" textLength="66" lengthAdjust="spacing">2018-07-18</text>
<line x1="300.5" y1="187.5" x2="300.5" y2="192.5" stroke="#ccc" stroke-width="1"/>
<text x="300.4" y="206.0" font-size="12" fill="#cbcbcb" text-anchor="middle" textLength="66" lengthAdjust="spacing">2018-07-22</text>
<line x1="384.5" y1="187.5" x2="384.5" y2="192.5" stroke="#ccc" stroke-width="1"/>
<text x="383.8" y="206.0" font-size="12" fill="#cbcbcb" text-anchor="middle" textLength="66" lengthAdjust="spacing">2018-07-26</text>
<line x1="467.5" y1="187.5" x2="467.5" y2="192.5" stroke="#ccc" stroke-width="1"/>
<text x="467.1" y="206.0" font-size="12" fill="#cbcbcb" text-anchor="middle" textLength="66" lengthAdjust="spacing">2018-07-30</text>
<line x1="550.5" y1="187.5" x2="550.5" y2="192.5" stroke="#ccc" stroke-width="1"/>
<text x="550.4" y="206.0" font-size="12" fill="#cbcbcb" text-anchor="middle" textLength="66" lengthAdjust="spacing">2018-08-03</text>
<line x1="634.5" y1="187.5" x2="634.5" y2="192.5" stroke="#ccc" stroke-width="1"/>
<text x="633.8" y="206.0" font-size="12" fill="#cbcbcb" text-anchor="middle" textLength="66" lengthAdjust="spacing">2018-08-07</text>
<polyline fill="none" stroke="#4d7fff" stroke-width="2" stroke-linejoin="round" points="50.4,67.7 71.2,86.7 92.1,143.9 112.9,123.6 133.8,123.6 154.6,88.5 175.4,143.9 196.2,69.6 217.1,143.9 237.9,143.9 258.8,143.9 279.6,140.3 300.4,68.1 321.2,108.9 342.1,163.7 362.9,88.5 383.8,141.6 404.6,121.9 425.4,143.9 446.2,86.1 467.1,165.2 487.9,122.9 508.8,123.6 529.6,106.3 550.4,163.4 571.2,143.9 592.1,143.9 612.9,100.8 633.8,123.6 654.6,144.6"/><circle cx="50.4" cy="67.7" r="4" fill="#4d7fff"/><circle cx="71.2" cy="86.7" r="4" fill="#4d7fff"/><circle cx="92.1" cy="143.9" r="4" fill="#4d7fff"/><circle cx="112.9" cy="123.6" r="4" fill="#4d7fff"/><circle cx="133.8" cy="123.6" r="4" fill="#4d7fff"/><circle cx="154.6" cy="88.5" r="4" fill="#4d7fff"/><circle cx="175.4" cy="143.9" r="4" fill="#4d7fff"/><circle cx="196.2" cy="69.6" r="4" fill="#4d7fff"/><circle cx="217.1" cy="143.9" r="4" fill="#4d7fff"/><circle cx="237.9" cy="143.9" r="4" fill="#4d7fff"/><circle cx="258.8" cy="143.9" r="4" fill="#4d7fff"/><circle cx="279.6" cy="140.3" r="4" fill="#4d7fff"/><circle cx="300.4" cy="68.1" r="4" fill="#4d7fff"/><circle cx="321.2" cy="108.9" r="4" fill="#4d7fff"/><circle cx="342.1" cy="163.7" r="4" fill="#4d7fff"/><circle cx="362.9" cy="88.5" r="4" fill="#4d7fff"/><circle cx="383.8" cy="141.6" r="4" fill="#4d7fff"/><circle cx="404.6" cy="121.9" r="4" fill="#4d7fff"/><circle cx="425.4" cy="143.9" r="4" fill="#4d7fff"/><circle cx="446.2" cy="86.1" r="4" fill="#4d7fff"/><circle cx="467.1" cy="165.2" r="4" fill="#4d7fff"/><circle cx="487.9" cy="122.9" r="4" fill="#4d7fff"/><circle cx="508.8" cy="123.6" r="4" fill="#4d7fff"/><circle cx="529.6" cy="106.3" r="4" fill="#4d7fff"/><circle cx="550.4" cy="163.4" r="4" fill="#4d7fff"/><circle cx="571.2" cy="143.9" r="4" fill="#4d7fff"/><circle cx="592.1" cy="143.9" r="4" fill="#4d7fff"/><circle cx="612.9" cy="100.8" r="4" fill="#4d7fff"/><circle cx="633.8" cy="123.6" r="4" fill="#4d7fff"/><circle cx="654.6" cy="144.6" r="4" fill="#4d7fff"/>
<polyline fill="none" stroke="#6be6c1" stroke-width="2" stroke-linejoin="round" points="50.4,63.1 71.2,82.0 92.1,139.2 112.9,119.0 133.8,119.0 154.6,83.9 175.4,139.2 196.2,64.9 217.1,139.2 237.9,139.2 258.8,139.2 279.6,135.7 300.4,63.4 321.2,104.3 342.1,159.1 362.9,83.9 383.8,137.0 404.6,117.3 425.4,139.2 446.2,81.5 467.1,160.6 487.9,118.2 508.8,119.0 529.6,101.7 550.4,158.7 571.2,139.2 592.1,139.2 612.9,96.1 633.8,119.0 654.6,140.0"/><circle cx="50.4" cy="63.1" r="4" fill="#6be6c1"/><circle cx="71.2" cy="82.0" r="4" fill="#6be6c1"/><circle cx="92.1" cy="139.2" r="4" fill="#6be6c1"/><circle cx="112.9" cy="119.0" r="4" fill="#6be6c1"/><circle cx="133.8" cy="119.0" r="4" fill="#6be6c1"/><circle cx="154.6" cy="83.9" r="4" fill="#6be6c1"/><circle cx="175.4" cy="139.2" r="4" fill="#6be6c1"/><circle cx="196.2" cy="64.9" r="4" fill="#6be6c1"/><circle cx="217.1" cy="139.2" r="4" fill="#6be6c1"/><circle cx="237.9" cy="139.2" r="4" fill="#6be6c1"/><circle cx="258.8" cy="139.2" r="4" fill="#6be6c1"/><circle cx="279.6" cy="135.7" r="4" fill="#6be6c1"/><circle cx="300.4" cy="63.4" r="4" fill="#6be6c1"/><circle cx="321.2" cy="104.3" r="4" fill="#6be6c1"/><circle cx="342.1" cy="159.1" r="4" fill="#6be6c1"/><circle cx="362.9" cy="83.9" r="4" fill="#6be6c1"/><circle cx="383.8" cy="137.0" r="4" fill="#6be6c1"/><circle cx="404.6" cy="117.3" r="4" fill="#6be6c1"/><circle cx="425.4" cy="139.2" r="4" fill="#6be6c1"/><circle cx="446.2" cy="81.5" r="4" fill="#6be6c1"/><circle cx="467.1" cy="160.6" r="4" fill="#6be6c1"/><circle cx="487.9" cy="118.2" r="4" fill="#6be6c1"/><circle cx="508.8" cy="119.0" r="4" fill="#6be6c1"/><circle cx="529.6" cy="101.7" r="4" fill="#6be6c1"/><circle cx="550.4" cy="158.7" r="4" fill="#6be6c1"/><circle cx="571.2" cy="139.2" r="4" fill="#6be6c1"/><circle cx="592.1" cy="139.2" r="4" fill="#6be6c1"/><circle cx="612.9" cy="96.1" r="4" fill="#6be6c1"/><circle cx="633.8" cy="119.0" r="4" fill="#6be6c1"/><circle cx="654.6" cy="140.0" r="4" fill="#6be6c1"/>
<polyline fill="none" stroke="#626c91" stroke-width="2" stroke-linejoin="round" points="50.4,58.4 71.2,77.4 92.1,134.6 112.9,114.3 133.8,114.3 154.6,79.2 175.4,134.6 196.2,60.3 217.1,134.6 237.9,134.6 258.8,134.6 279.6,131.0 300.4,58.8 321.2,99.7 342.1,154.4 362.9,79.2 383.8,132.3 404.6,112.7 425.4,134.6 446.2,76.8 467.1,155.9 487.9,113.6 508.8,114.3 529.6,97.1 550.4,154.1 571.2,134.6 592.1,134.6 612.9,91.5 633.8,114.3 654.6,135.3"/><circle cx="50.4" cy="58.4" r="4" fill="#626c91"/><circle cx="71.2" cy="77.4" r="4" fill="#626c91"/><circle cx="92.1" cy="134.6" r="4" fill="#626c91"/><circle cx="112.9" cy="114.3" r="4" fill="#626c91"/><circle cx="133.8" cy="114.3" r="4" fill="#626c91"/><circle cx="154.6" cy="79.2" r="4" fill="#626c91"/><circle cx="175.4" cy="134.6" r="4" fill="#626c91"/><circle cx="196.2" cy="60.3" r="4" fill="#626c91"/><circle cx="217.1" cy="134.6" r="4" fill="#626c91"/><circle cx="237.9" cy="134.6" r="4" fill="#626c91"/><circle cx="258.8" cy="134.6" r="4" fill="#626c91"/><circle cx="279.6" cy="131.0" r="4" fill="#626c91"/><circle cx="300.4" cy="58.8" r="4" fill="#626c91"/><circle cx="321.2" cy="99.7" r="4" fill="#626c91"/><circle cx="342.1" cy="154.4" r="4" fill="#626c91"/><circle cx="362.9" cy="79.2" r="4" fill="#626c91"/><circle cx="383.8" cy="132.3" r="4" fill="#626c91"/><circle cx="404.6" cy="112.7" r="4" fill="#626c91"/><circle cx="425.4" cy="134.6" r="4" fill="#626c91"/><circle cx="446.2" cy="76.8" r="4" fill="#626c91"/><circle cx="467.1" cy="155.9" r="4" fill="#626c91"/><circle cx="487.9" cy="113.6" r="4" fill="#626c91"/><circle cx="508.8" cy="114.3" r="4" fill="#626c91"/><circle cx="529.6" cy="97.1" r="4" fill="#626c91"/><circle cx="550.4" cy="154.1" r="4" fill="#626c91"/><circle cx="571.2" cy="134.6" r="4" fill="#626c91"/><circle cx="592.1" cy="134.6" r="4" fill="#626c91"/><circle cx="612.9" cy="91.5" r="4" fill="#626c91"/><circle cx="633.8" cy="114.3" r="4" fill="#626c91"/><circle cx="654.6" cy="135.3" r="4" fill="#626c91"/>
</svg>
<svg class="abs" style="left:1135px;top:885px" width="720" height="250" viewBox="0 0 720 250" font-family="Liberation Sans, Noto Sans CJK SC, sans-serif">
<text x="15" y="24" font-size="14" fill="#666">购买按钮赢得率</text>
<line x1="422" y1="18.5" x2="447" y2="18.5" stroke="#4d7fff" stroke-width="2" opacity="0.5"/><circle cx="434.5" cy="18.5" r="5.6" fill="#4d7fff"/><text x="452" y="23" font-size="12" fill="#999">本商品</text>
<line x1="498" y1="18.5" x2="523" y2="18.5" stroke="#6be6c1" stroke-width="2" opacity="0.5"/><circle cx="511" cy="18.5" r="5.6" fill="#6be6c1"/><text x="529" y="23" font-size="12" fill="#999">同行平均</text>
<line x1="587" y1="18.5" x2="612" y2="18.5" stroke="#626c91" stroke-width="2" opacity="0.5"/><circle cx="599.5" cy="18.5" r="5.6" fill="#626c91"/><text x="617.5" y="23" font-size="12" fill="#999">同行优秀</text>
<path d="M691.2 9.3 V21 M685.8 15.6 L691.2 21 L696.6 15.6 M684.6 20 V24.4 H697.8 V20" fill="none" stroke="#aaa" stroke-width="1.1"/>
<rect x="123.33" y="57.5" width="20.83" height="130.0" fill="#f9f9f9"/>
<rect x="144.17" y="57.5" width="20.83" height="130.0" fill="#f3f3f3"/>
<rect x="269.17" y="57.5" width="20.83" height="130.0" fill="#f9f9f9"/>
<rect x="290.00" y="57.5" width="20.83" height="130.0" fill="#f3f3f3"/>
<rect x="415.00" y="57.5" width="20.83" height="130.0" fill="#f9f9f9"/>
<rect x="435.83" y="57.5" width="20.83" height="130.0" fill="#f3f3f3"/>
<rect x="560.83" y="57.5" width="20.83" height="130.0" fill="#f9f9f9"/>
<rect x="581.67" y="57.5" width="20.83" height="130.0" fill="#f3f3f3"/>
<defs><linearGradient id="wm12" x1="0" y1="0" x2="1" y2="0"><stop offset="0.42" stop-color="#ebebeb"/><stop offset="0.5" stop-color="#f4f4f4"/></linearGradient></defs>
<path d="M6.7 19.2 Q6.6 18.4 7.6 17.9 L8.6 17.4 Q9.6 17 10.3 17.8 Q10.9 18.5 11.4 17.5 L13.4 13.2 Q14.8 10.6 17.3 10.6 Q19.9 10.6 21 12.8 L22.8 16.4 Q23.4 17.6 23.9 16.4 L26.1 11 L23.6 10.5 L30.6 7.2 Q31.1 7 31.4 7.5 L34.7 14.3 L32.1 13.3 L27.2 23.9 Q25.7 26.8 23.3 26.8 Q21 26.8 20 24.8 L18.1 20.9 Q17.6 19.9 17.1 20.9 L15.7 23.9 Q14.2 26.7 11.7 26.7 Q9.6 26.7 8.6 25.2 Z" transform="translate(572.2 110.4) scale(1.93)" fill="url(#wm12)"/>
<text x="566.8" y="175.9" font-size="17.5" fill="#e3e3e3" textLength="88" lengthAdjust="spacingAndGlyphs">amz4seller</text>
<text x="25.5" y="191.55" font-size="12" fill="#cbcbcb" text-anchor="end" letter-spacing="0.35">0</text>
<line x1="40.5" y1="161.5" x2="665.0" y2="161.5" stroke="#eaeaea" stroke-width="1"/>
<text x="25.5" y="165.55" font-size="12" fill="#cbcbcb" text-anchor="end" letter-spacing="0.35">20</text>
<line x1="40.5" y1="135.5" x2="665.0" y2="135.5" stroke="#eaeaea" stroke-width="1"/>
<text x="25.5" y="139.55" font-size="12" fill="#cbcbcb" text-anchor="end" letter-spacing="0.35">40</text>
<line x1="40.5" y1="109.5" x2="665.0" y2="109.5" stroke="#eaeaea" stroke-width="1"/>
<text x="25.5" y="113.55" font-size="12" fill="#cbcbcb" text-anchor="end" letter-spacing="0.35">60</text>
<line x1="40.5" y1="83.5" x2="665.0" y2="83.5" stroke="#eaeaea" stroke-width="1"/>
<text x="25.5" y="87.55" font-size="12" fill="#cbcbcb" text-anchor="end" letter-spacing="0.35">80</text>
<line x1="40.5" y1="57.5" x2="665.0" y2="57.5" stroke="#eaeaea" stroke-width="1"/>
<text x="25.5" y="61.55" font-size="12" fill="#cbcbcb" text-anchor="end" letter-spacing="0.35">100</text>
<line x1="40.5" y1="57.0" x2="40.5" y2="188.0" stroke="#ccc" stroke-width="1"/>
<line x1="40.0" y1="187.5" x2="665.0" y2="187.5" stroke="#ccc" stroke-width="1"/>
<line x1="50.5" y1="187.5" x2="50.5" y2="192.5" stroke="#ccc" stroke-width="1"/>
<text x="50.4" y="206.0" font-size="12" fill="#cbcbcb" text-anchor="middle" textLength="66" lengthAdjust="spacing">2018-07-10</text>
<line x1="134.5" y1="187.5" x2="134.5" y2="192.5" stroke="#ccc" stroke-width="1"/>
<text x="133.8" y="206.0" font-size="12" fill="#cbcbcb" text-anchor="middle" textLength="66" lengthAdjust="spacing">2018-07-14</text>
<line x1="217.5" y1="187.5" x2="217.5" y2="192.5" stroke="#ccc" stroke-width="1"/>
<text x="217.1" y="206.0" font-size="12" fill="#cbcbcb" text-anchor="middle" textLength="66" lengthAdjust="spacing">2018-07-18</text>
<line x1="300.5" y1="187.5" x2="300.5" y2="192.5" stroke="#ccc" stroke-width="1"/>
<text x="300.4" y="206.0" font-size="12" fill="#cbcbcb" text-anchor="middle" textLength="66" lengthAdjust="spacing">2018-07-22</text>
<line x1="384.5" y1="187.5" x2="384.5" y2="192.5" stroke="#ccc" stroke-width="1"/>
<text x="383.8" y="206.0" font-size="12" fill="#cbcbcb" text-anchor="middle" textLength="66" lengthAdjust="spacing">2018-07-26</text>
<line x1="467.5" y1="187.5" x2="467.5" y2="192.5" stroke="#ccc" stroke-width="1"/>
<text x="467.1" y="206.0" font-size="12" fill="#cbcbcb" text-anchor="middle" textLength="66" lengthAdjust="spacing">2018-07-30</text>
<line x1="550.5" y1="187.5" x2="550.5" y2="192.5" stroke="#ccc" stroke-width="1"/>
<text x="550.4" y="206.0" font-size="12" fill="#cbcbcb" text-anchor="middle" textLength="66" lengthAdjust="spacing">2018-08-03</text>
<line x1="634.5" y1="187.5" x2="634.5" y2="192.5" stroke="#ccc" stroke-width="1"/>
<text x="633.8" y="206.0" font-size="12" fill="#cbcbcb" text-anchor="middle" textLength="66" lengthAdjust="spacing">2018-08-07</text>
<polyline fill="none" stroke="#4d7fff" stroke-width="2" stroke-linejoin="round" points="50.4,59.6 71.2,58.3 92.1,58.3 112.9,57.0 133.8,58.3 154.6,59.6 175.4,58.3 196.2,58.3 217.1,57.0 237.9,58.3 258.8,59.6 279.6,58.3 300.4,58.3 321.2,57.0 342.1,58.3 362.9,59.6 383.8,58.3 404.6,58.3 425.4,57.0 446.2,58.3 467.1,59.6 487.9,58.3 508.8,58.3 529.6,57.0 550.4,58.3 571.2,59.6 592.1,58.3 612.9,58.3 633.8,57.0 654.6,58.3"/><circle cx="50.4" cy="59.6" r="4" fill="#4d7fff"/><circle cx="71.2" cy="58.3" r="4" fill="#4d7fff"/><circle cx="92.1" cy="58.3" r="4" fill="#4d7fff"/><circle cx="112.9" cy="57.0" r="4" fill="#4d7fff"/><circle cx="133.8" cy="58.3" r="4" fill="#4d7fff"/><circle cx="154.6" cy="59.6" r="4" fill="#4d7fff"/><circle cx="175.4" cy="58.3" r="4" fill="#4d7fff"/><circle cx="196.2" cy="58.3" r="4" fill="#4d7fff"/><circle cx="217.1" cy="57.0" r="4" fill="#4d7fff"/><circle cx="237.9" cy="58.3" r="4" fill="#4d7fff"/><circle cx="258.8" cy="59.6" r="4" fill="#4d7fff"/><circle cx="279.6" cy="58.3" r="4" fill="#4d7fff"/><circle cx="300.4" cy="58.3" r="4" fill="#4d7fff"/><circle cx="321.2" cy="57.0" r="4" fill="#4d7fff"/><circle cx="342.1" cy="58.3" r="4" fill="#4d7fff"/><circle cx="362.9" cy="59.6" r="4" fill="#4d7fff"/><circle cx="383.8" cy="58.3" r="4" fill="#4d7fff"/><circle cx="404.6" cy="58.3" r="4" fill="#4d7fff"/><circle cx="425.4" cy="57.0" r="4" fill="#4d7fff"/><circle cx="446.2" cy="58.3" r="4" fill="#4d7fff"/><circle cx="467.1" cy="59.6" r="4" fill="#4d7fff"/><circle cx="487.9" cy="58.3" r="4" fill="#4d7fff"/><circle cx="508.8" cy="58.3" r="4" fill="#4d7fff"/><circle cx="529.6" cy="57.0" r="4" fill="#4d7fff"/><circle cx="550.4" cy="58.3" r="4" fill="#4d7fff"/><circle cx="571.2" cy="59.6" r="4" fill="#4d7fff"/><circle cx="592.1" cy="58.3" r="4" fill="#4d7fff"/><circle cx="612.9" cy="58.3" r="4" fill="#4d7fff"/><circle cx="633.8" cy="57.0" r="4" fill="#4d7fff"/><circle cx="654.6" cy="58.3" r="4" fill="#4d7fff"/>
<polyline fill="none" stroke="#6be6c1" stroke-width="2" stroke-linejoin="round" points="50.4,59.6 71.2,58.3 92.1,58.3 112.9,57.0 133.8,58.3 154.6,59.6 175.4,58.3 196.2,58.3 217.1,57.0 237.9,58.3 258.8,59.6 279.6,58.3 300.4,58.3 321.2,57.0 342.1,58.3 362.9,59.6 383.8,58.3 404.6,58.3 425.4,57.0 446.2,58.3 467.1,59.6 487.9,58.3 508.8,58.3 529.6,57.0 550.4,58.3 571.2,59.6 592.1,58.3 612.9,58.3 633.8,57.0 654.6,58.3"/><circle cx="50.4" cy="59.6" r="4" fill="#6be6c1"/><circle cx="71.2" cy="58.3" r="4" fill="#6be6c1"/><circle cx="92.1" cy="58.3" r="4" fill="#6be6c1"/><circle cx="112.9" cy="57.0" r="4" fill="#6be6c1"/><circle cx="133.8" cy="58.3" r="4" fill="#6be6c1"/><circle cx="154.6" cy="59.6" r="4" fill="#6be6c1"/><circle cx="175.4" cy="58.3" r="4" fill="#6be6c1"/><circle cx="196.2" cy="58.3" r="4" fill="#6be6c1"/><circle cx="217.1" cy="57.0" r="4" fill="#6be6c1"/><circle cx="237.9" cy="58.3" r="4" fill="#6be6c1"/><circle cx="258.8" cy="59.6" r="4" fill="#6be6c1"/><circle cx="279.6" cy="58.3" r="4" fill="#6be6c1"/><circle cx="300.4" cy="58.3" r="4" fill="#6be6c1"/><circle cx="321.2" cy="57.0" r="4" fill="#6be6c1"/><circle cx="342.1" cy="58.3" r="4" fill="#6be6c1"/><circle cx="362.9" cy="59.6" r="4" fill="#6be6c1"/><circle cx="383.8" cy="58.3" r="4" fill="#6be6c1"/><circle cx="404.6" cy="58.3" r="4" fill="#6be6c1"/><circle cx="425.4" cy="57.0" r="4" fill="#6be6c1"/><circle cx="446.2" cy="58.3" r="4" fill="#6be6c1"/><circle cx="467.1" cy="59.6" r="4" fill="#6be6c1"/><circle cx="487.9" cy="58.3" r="4" fill="#6be6c1"/><circle cx="508.8" cy="58.3" r="4" fill="#6be6c1"/><circle cx="529.6" cy="57.0" r="4" fill="#6be6c1"/><circle cx="550.4" cy="58.3" r="4" fill="#6be6c1"/><circle cx="571.2" cy="59.6" r="4" fill="#6be6c1"/><circle cx="592.1" cy="58.3" r="4" fill="#6be6c1"/><circle cx="612.9" cy="58.3" r="4" fill="#6be6c1"/><circle cx="633.8" cy="57.0" r="4" fill="#6be6c1"/><circle cx="654.6" cy="58.3" r="4" fill="#6be6c1"/>
<polyline fill="none" stroke="#626c91" stroke-width="2" stroke-linejoin="round" points="50.4,59.6 71.2,58.3 92.1,58.3 112.9,57.0 133.8,58.3 154.6,59.6 175.4,58.3 196.2,58.3 217.1,57.0 237.9,58.3 258.8,59.6 279.6,58.3 300.4,58.3 321.2,57.0 342.1,58.3 362.9,59.6 383.8,58.3 404.6,58.3 425.4,57.0 446.2,58.3 467.1,59.6 487.9,58.3 508.8,58.3 529.6,57.0 550.4,58.3 571.2,59.6 592.1,58.3 612.9,58.3 633.8,57.0 654.6,58.3"/><circle cx="50.4" cy="59.6" r="4" fill="#626c91"/><circle cx="71.2" cy="58.3" r="4" fill="#626c91"/><circle cx="92.1" cy="58.3" r="4" fill="#626c91"/><circle cx="112.9" cy="57.0" r="4" fill="#626c91"/><circle cx="133.8" cy="58.3" r="4" fill="#626c91"/><circle cx="154.6" cy="59.6" r="4" fill="#626c91"/><circle cx="175.4" cy="58.3" r="4" fill="#626c91"/><circle cx="196.2" cy="58.3" r="4" fill="#626c91"/><circle cx="217.1" cy="57.0" r="4" fill="#626c91"/><circle cx="237.9" cy="58.3" r="4" fill="#626c91"/><circle cx="258.8" cy="59.6" r="4" fill="#626c91"/><circle cx="279.6" cy="58.3" r="4" fill="#626c91"/><circle cx="300.4" cy="58.3" r="4" fill="#626c91"/><circle cx="321.2" cy="57.0" r="4" fill="#626c91"/><circle cx="342.1" cy="58.3" r="4" fill="#626c91"/><circle cx="362.9" cy="59.6" r="4" fill="#626c91"/><circle cx="383.8" cy="58.3" r="4" fill="#626c91"/><circle cx="404.6" cy="58.3" r="4" fill="#626c91"/><circle cx="425.4" cy="57.0" r="4" fill="#626c91"/><circle cx="446.2" cy="58.3" r="4" fill="#626c91"/><circle cx="467.1" cy="59.6" r="4" fill="#626c91"/><circle cx="487.9" cy="58.3" r="4" fill="#626c91"/><circle cx="508.8" cy="58.3" r="4" fill="#626c91"/><circle cx="529.6" cy="57.0" r="4" fill="#626c91"/><circle cx="550.4" cy="58.3" r="4" fill="#626c91"/><circle cx="571.2" cy="59.6" r="4" fill="#626c91"/><circle cx="592.1" cy="58.3" r="4" fill="#626c91"/><circle cx="612.9" cy="58.3" r="4" fill="#626c91"/><circle cx="633.8" cy="57.0" r="4" fill="#626c91"/><circle cx="654.6" cy="58.3" r="4" fill="#626c91"/>
</svg>
<div class="abs" style="left:260px;top:1032px;width:1660px;height:48px;background:#fff"></div>
<div class="t" style="left:270px;top:1049px;font-size:13px;color:#48576a;line-height:16px;word-spacing:0.8px">共 5 条</div>
<div class="inp" style="left:326px;top:1042px;width:100px;height:28px;border-radius:3px"></div>
<div class="t" style="left:346px;top:1049px;font-size:13px;color:#48576a;line-height:16px">10条/页</div>
<div class="chev" style="left:410px;top:1050px;transform:rotate(225deg);border-color:#c0c4cc;width:6px;height:6px"></div>
<div class="chev" style="left:454px;top:1052px;transform:rotate(-45deg);border-color:#a0a5ae;width:6px;height:6px"></div>
<div class="t" style="left:491px;top:1049px;font-size:13px;font-weight:bold;color:#409eff;line-height:16px">1</div>
<div class="chev" style="left:528px;top:1052px;transform:rotate(135deg);border-color:#a0a5ae;width:6px;height:6px"></div>
<div class="t" style="left:572px;top:1048px;font-size:13px;color:#48576a;line-height:16px">前往</div>
<div class="inp" style="left:603px;top:1042px;width:45px;height:28px;border-radius:3px"></div>
<div class="t" style="left:621px;top:1048px;font-size:13px;color:#48576a;line-height:16px">1</div>
<div class="t" style="left:652px;top:1048px;font-size:13px;color:#48576a;line-height:16px">页</div>
<div class="abs" style="left:1912px;top:238px;width:8px;height:312px;background:#dadada;border-radius:4px"></div>
</body></html>
